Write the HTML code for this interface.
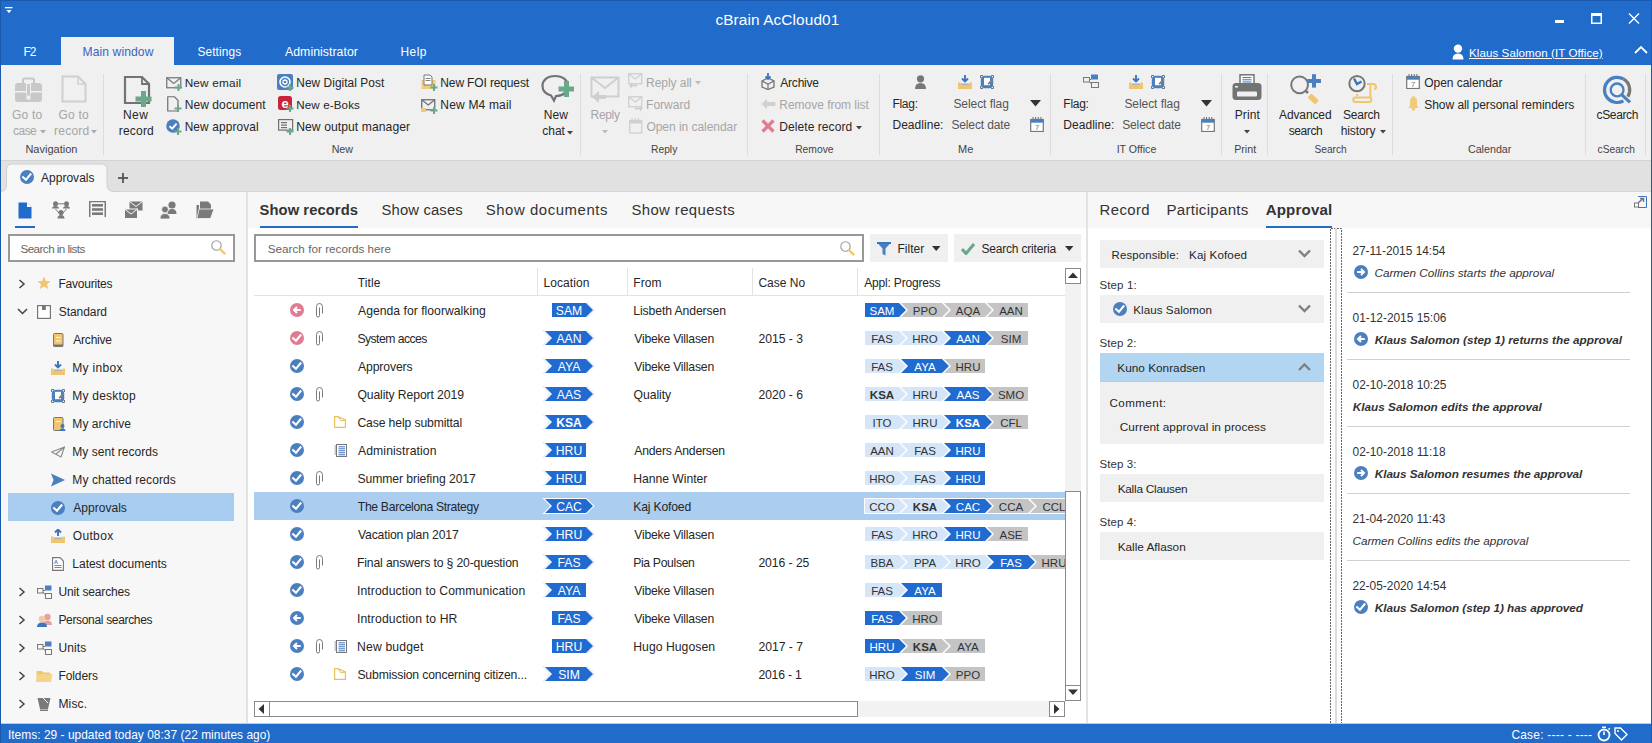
<!DOCTYPE html>
<html><head><meta charset="utf-8"><title>cBrain AcCloud01</title>
<style>
html,body{margin:0;padding:0;}
body{width:1652px;height:743px;overflow:hidden;position:relative;background:#f0f0f0;font-family:"Liberation Sans",sans-serif;}
.t{position:absolute;white-space:nowrap;}
.r{position:absolute;box-sizing:content-box;}
svg.r{display:block;}
</style></head><body>
<div class="r" style="left:0px;top:0px;width:1652px;height:65px;background:#216bcb;"></div>
<div class="r" style="left:0px;top:0px;width:1652px;height:1px;background:#1a59ad;"></div>
<svg class="r" style="left:4px;top:6px;" width="12" height="10" viewBox="0 0 12 10"><rect x="1" y="1" width="7.5" height="1.3" fill="#fff"/><path d="M2.5 4 L7.5 4 L5 7.2 Z" fill="#fff"/></svg>
<div class="t" style="left:715.38px;top:10px;font-size:15.40px;line-height:20px;color:#ffffff;letter-spacing:0.104px;">cBrain AcCloud01</div>
<div class="r" style="left:1555px;top:20px;width:9px;height:3px;background:#fff;"></div>
<svg class="r" style="left:1591px;top:13px;" width="11" height="11" viewBox="0 0 11 11"><rect x="0.75" y="0.75" width="9.5" height="9.5" fill="none" stroke="#fff" stroke-width="1.5"/><rect x="0" y="0" width="11" height="3" fill="#fff"/></svg>
<svg class="r" style="left:1628px;top:13px;" width="12" height="11" viewBox="0 0 12 11"><path d="M1 0.5 L11 10.5 M11 0.5 L1 10.5" stroke="#fff" stroke-width="1.4"/></svg>
<div class="r" style="left:61px;top:37px;width:113px;height:28px;background:#f0f0f0;"></div>
<div class="t" style="left:23.54px;top:45px;font-size:12.00px;line-height:15px;color:#fff;letter-spacing:-1.080px;">F2</div>
<div class="t" style="left:82.53px;top:44px;font-size:12.10px;line-height:16px;color:#3b64c2;letter-spacing:0.101px;">Main window</div>
<div class="t" style="left:197.41px;top:45px;font-size:11.90px;line-height:15px;color:#fff;letter-spacing:0.113px;">Settings</div>
<div class="t" style="left:285.00px;top:44px;font-size:12.30px;line-height:16px;color:#fff;letter-spacing:0.040px;">Administrator</div>
<div class="t" style="left:400.55px;top:45px;font-size:11.90px;line-height:15px;color:#fff;letter-spacing:0.471px;">Help</div>
<svg class="r" style="left:1452px;top:44px;" width="12" height="16" viewBox="0 0 12 16"><circle cx="6" cy="4.6" r="4.2" fill="#fff"/><path d="M0.5 15.5 Q0.5 9.5 6 9.5 Q11.5 9.5 11.5 15.5 Z" fill="#fff"/></svg>
<div class="t" style="left:1469.07px;top:45px;font-size:11.60px;line-height:15px;color:#fff;letter-spacing:0.053px;text-decoration:underline;">Klaus Salomon (IT Office)</div>
<svg class="r" style="left:1634px;top:45px;" width="14" height="9" viewBox="0 0 14 9"><path d="M1 8 L7 2 L13 8" fill="none" stroke="#fff" stroke-width="1.8"/></svg>
<div class="r" style="left:1px;top:65px;width:1650px;height:95px;background:#f0f0f0;"></div>
<div class="r" style="left:1px;top:160px;width:1650px;height:1px;background:#d4d4d4;"></div>
<div class="r" style="left:103px;top:74px;width:1px;height:81px;background:#dcdcdc;"></div>
<div class="r" style="left:580px;top:74px;width:1px;height:81px;background:#dcdcdc;"></div>
<div class="r" style="left:747px;top:74px;width:1px;height:81px;background:#dcdcdc;"></div>
<div class="r" style="left:879px;top:74px;width:1px;height:81px;background:#dcdcdc;"></div>
<div class="r" style="left:1050px;top:74px;width:1px;height:81px;background:#dcdcdc;"></div>
<div class="r" style="left:1221px;top:74px;width:1px;height:81px;background:#dcdcdc;"></div>
<div class="r" style="left:1267px;top:74px;width:1px;height:81px;background:#dcdcdc;"></div>
<div class="r" style="left:1392px;top:74px;width:1px;height:81px;background:#dcdcdc;"></div>
<div class="r" style="left:1585px;top:74px;width:1px;height:81px;background:#dcdcdc;"></div>
<div class="r" style="left:1645px;top:74px;width:1px;height:81px;background:#dcdcdc;"></div>
<div class="t" style="left:25.42px;top:142px;font-size:11.00px;line-height:14px;color:#444;">Navigation</div>
<div class="t" style="left:331.64px;top:142px;font-size:10.70px;line-height:14px;color:#444;">New</div>
<div class="t" style="left:650.98px;top:143px;font-size:10.30px;line-height:13px;color:#444;">Reply</div>
<div class="t" style="left:795.18px;top:143px;font-size:10.30px;line-height:13px;color:#444;">Remove</div>
<div class="t" style="left:958.12px;top:142px;font-size:11.00px;line-height:14px;color:#444;">Me</div>
<div class="t" style="left:1116.65px;top:142px;font-size:10.60px;line-height:14px;color:#444;">IT Office</div>
<div class="t" style="left:1234.14px;top:142px;font-size:10.70px;line-height:14px;color:#444;">Print</div>
<div class="t" style="left:1314.49px;top:143px;font-size:10.20px;line-height:13px;color:#444;">Search</div>
<div class="t" style="left:1467.96px;top:142px;font-size:10.70px;line-height:14px;color:#444;">Calendar</div>
<div class="t" style="left:1597.59px;top:143px;font-size:10.20px;line-height:13px;color:#444;">cSearch</div>
<svg class="r" style="left:14px;top:77px;" width="29" height="26" viewBox="0 0 29 26"><rect x="1" y="6" width="27" height="19" rx="3" fill="#c8c8c8"/><rect x="9" y="1.5" width="11" height="6" rx="1.5" fill="none" stroke="#c8c8c8" stroke-width="2"/><rect x="1" y="14" width="27" height="1.5" fill="#f0f0f0"/><rect x="12" y="6" width="5" height="15" fill="#f0f0f0"/><rect x="13" y="7" width="3" height="13" fill="#c8c8c8"/><rect x="12" y="18" width="5" height="5" fill="#f0f0f0" stroke="#c8c8c8" stroke-width="1"/></svg>
<svg class="r" style="left:61px;top:75px;" width="26" height="28" viewBox="0 0 26 28"><path d="M1.5 1.5 H17 L24.5 9 V26.5 H1.5 Z" fill="none" stroke="#cfcfcf" stroke-width="2"/><path d="M17 1.5 V9 H24.5" fill="none" stroke="#cfcfcf" stroke-width="1.5"/></svg>
<div class="t" style="left:12.00px;top:108px;font-size:12.00px;line-height:15px;color:#a6a6a6;letter-spacing:0.195px;">Go to</div>
<div class="t" style="left:13.12px;top:124px;font-size:12.00px;line-height:15px;color:#a6a6a6;letter-spacing:-0.553px;">case</div>
<div class="t" style="left:54.08px;top:124px;font-size:12.00px;line-height:15px;color:#a6a6a6;letter-spacing:0.216px;">record</div>
<div class="t" style="left:58.60px;top:108px;font-size:12.00px;line-height:15px;color:#a6a6a6;letter-spacing:0.195px;">Go to</div>
<svg class="r" style="left:40px;top:130px;" width="6" height="4" viewBox="0 0 6 4"><path d="M0 0 H6 L3 3.5 Z" fill="#aaa"/></svg>
<svg class="r" style="left:91px;top:130px;" width="6" height="4" viewBox="0 0 6 4"><path d="M0 0 H6 L3 3.5 Z" fill="#aaa"/></svg>
<svg class="r" style="left:123px;top:75px;" width="30" height="32" viewBox="0 0 30 32"><path d="M2 2 H19 L26 9 V28 H2 Z" fill="none" stroke="#737373" stroke-width="2.2"/><path d="M19 2 V9 H26" fill="none" stroke="#737373" stroke-width="1.8"/><rect x="18" y="16" width="5" height="16" fill="#6aa88c"/><rect x="12.5" y="21.5" width="16" height="5" fill="#6aa88c"/></svg>
<div class="t" style="left:123.04px;top:108px;font-size:12.00px;line-height:15px;color:#262626;letter-spacing:0.420px;">New</div>
<div class="t" style="left:118.68px;top:124px;font-size:12.00px;line-height:15px;color:#262626;letter-spacing:0.216px;">record</div>
<svg class="r" style="left:166px;top:76px;" width="17" height="15" viewBox="0 0 17 15"><rect x="0.75" y="1.75" width="14" height="10" fill="none" stroke="#7a7a7a" stroke-width="1.3"/><path d="M0.75 1.75 L7.75 7.5 L14.75 1.75" fill="none" stroke="#7a7a7a" stroke-width="1.2"/><rect x="11.5" y="8" width="2" height="7" fill="#6aa88c"/><rect x="9" y="10.5" width="7" height="2" fill="#6aa88c"/></svg>
<svg class="r" style="left:167px;top:96px;" width="16" height="17" viewBox="0 0 16 17"><path d="M0.75 0.75 H7.5 L11 4.2 V15 H0.75 Z" fill="none" stroke="#6f6f6f" stroke-width="1.2"/><rect x="10" y="9" width="2" height="7" fill="#6aa88c"/><rect x="7.5" y="11.5" width="7" height="2" fill="#6aa88c"/></svg>
<svg class="r" style="left:166px;top:119px;" width="17" height="16" viewBox="0 0 17 16"><circle cx="7" cy="7" r="6.8" fill="#4a80c0"/><path d="M3.6 7.2 L6.2 9.6 L10.6 4.6" fill="none" stroke="#fff" stroke-width="1.9"/><rect x="11" y="9" width="2" height="7" fill="#6aa88c"/><rect x="8.5" y="11.5" width="7" height="2" fill="#6aa88c"/></svg>
<div class="t" style="left:184.66px;top:76px;font-size:11.80px;line-height:15px;color:#262626;letter-spacing:0.168px;">New email</div>
<div class="t" style="left:184.64px;top:98px;font-size:12.00px;line-height:15px;color:#262626;letter-spacing:0.095px;">New document</div>
<div class="t" style="left:184.65px;top:120px;font-size:11.85px;line-height:15px;color:#262626;letter-spacing:0.151px;">New approval</div>
<svg class="r" style="left:277px;top:74px;" width="17" height="17" viewBox="0 0 17 17"><rect x="0" y="0" width="16" height="16" rx="2" fill="#4a80c0"/><circle cx="8" cy="8" r="5" fill="none" stroke="#fff" stroke-width="1.6"/><circle cx="8" cy="8" r="2" fill="none" stroke="#fff" stroke-width="1.3"/><rect x="12" y="10" width="2" height="7" fill="#6aa88c"/><rect x="9.5" y="12.5" width="7" height="2" fill="#6aa88c"/></svg>
<svg class="r" style="left:278px;top:96px;" width="16" height="17" viewBox="0 0 16 17"><rect x="0" y="0" width="14" height="14" rx="2.5" fill="#c9243a"/><text x="7" y="11.5" font-family="Liberation Sans" font-size="13" font-weight="bold" fill="#fff" text-anchor="middle">e</text><rect x="11" y="9" width="2" height="7" fill="#6aa88c"/><rect x="8.5" y="11.5" width="7" height="2" fill="#6aa88c"/></svg>
<svg class="r" style="left:278px;top:119px;" width="17" height="16" viewBox="0 0 17 16"><rect x="0.6" y="0.6" width="14" height="10.5" fill="none" stroke="#6f6f6f" stroke-width="1.2"/><rect x="3" y="3" width="6" height="1.2" fill="#6f6f6f"/><rect x="3" y="5.5" width="6" height="1.2" fill="#6f6f6f"/><rect x="3" y="8" width="6" height="1.2" fill="#6f6f6f"/><rect x="11" y="9" width="2" height="7" fill="#6aa88c"/><rect x="8.5" y="11.5" width="7" height="2" fill="#6aa88c"/></svg>
<div class="t" style="left:296.25px;top:76px;font-size:11.86px;line-height:15px;color:#262626;letter-spacing:0.068px;">New Digital Post</div>
<div class="t" style="left:296.27px;top:97px;font-size:11.60px;line-height:15px;color:#262626;letter-spacing:0.128px;">New e-Boks</div>
<div class="t" style="left:296.23px;top:119px;font-size:12.15px;line-height:16px;color:#262626;letter-spacing:0.067px;">New output manager</div>
<svg class="r" style="left:421px;top:74px;" width="17" height="17" viewBox="0 0 17 17"><rect x="0.5" y="6" width="14" height="9" fill="#f0cc7a"/><path d="M3 1 H9 L11 3 V11 H3 Z" fill="#fff" stroke="#777" stroke-width="1"/><rect x="4.5" y="4" width="5" height="0.9" fill="#777"/><rect x="4.5" y="6" width="5" height="0.9" fill="#777"/><rect x="12" y="10" width="2" height="7" fill="#6aa88c"/><rect x="9.5" y="12.5" width="7" height="2" fill="#6aa88c"/></svg>
<svg class="r" style="left:421px;top:98px;" width="17" height="17" viewBox="0 0 17 17"><rect x="0.75" y="1.75" width="13" height="10" fill="none" stroke="#6f6f6f" stroke-width="1.3"/><path d="M0.75 1.75 L7.25 7 L13.75 1.75" fill="none" stroke="#6f6f6f" stroke-width="1.2"/><rect x="0" y="10" width="5" height="4" fill="#f0cc7a"/><rect x="12" y="9" width="2" height="7" fill="#6aa88c"/><rect x="9.5" y="11.5" width="7" height="2" fill="#6aa88c"/></svg>
<div class="t" style="left:440.34px;top:76px;font-size:12.00px;line-height:15px;color:#262626;letter-spacing:-0.139px;">New FOI request</div>
<div class="t" style="left:440.34px;top:98px;font-size:12.00px;line-height:15px;color:#262626;letter-spacing:0.182px;">New M4 mail</div>
<svg class="r" style="left:541px;top:74px;" width="33" height="30" viewBox="0 0 33 30"><path d="M14 2 C6 2 1.5 6.5 1.5 12 C1.5 16.5 5 20 10 21.5 L13 26.5 L15 22 C22 22 27 17.5 27 12 C27 6.5 22 2 14 2 Z" fill="none" stroke="#737373" stroke-width="2.2"/><rect x="23" y="7" width="5" height="16" fill="#6aa88c"/><rect x="17.5" y="12.5" width="16" height="5" fill="#6aa88c"/></svg>
<div class="t" style="left:543.84px;top:108px;font-size:12.00px;line-height:15px;color:#262626;letter-spacing:0.020px;">New</div>
<div class="t" style="left:542.22px;top:124px;font-size:12.00px;line-height:15px;color:#262626;">chat</div>
<svg class="r" style="left:567px;top:131px;" width="6" height="4" viewBox="0 0 6 4"><path d="M0 0 H6 L3 3.5 Z" fill="#444"/></svg>
<svg class="r" style="left:590px;top:76px;" width="30" height="28" viewBox="0 0 30 28"><rect x="1.5" y="1.5" width="27" height="19" fill="none" stroke="#cfcfcf" stroke-width="2"/><path d="M1.5 1.5 L15 12 L28.5 1.5" fill="none" stroke="#cfcfcf" stroke-width="2"/><path d="M2 21 L9 15 V19 H16 V23 H9 V27 Z" fill="#cfcfcf"/></svg>
<div class="t" style="left:590.54px;top:108px;font-size:12.00px;line-height:15px;color:#a6a6a6;letter-spacing:-0.315px;">Reply</div>
<svg class="r" style="left:602px;top:130px;" width="6" height="4" viewBox="0 0 6 4"><path d="M0 0 H6 L3 3.5 Z" fill="#bbb"/></svg>
<svg class="r" style="left:628px;top:73px;" width="16" height="16" viewBox="0 0 16 16"><rect x="0.75" y="0.75" width="13" height="10" fill="none" stroke="#cfcfcf" stroke-width="1.3"/><path d="M0.75 0.75 L7.25 6 L13.75 0.75" fill="none" stroke="#cfcfcf" stroke-width="1.2"/><path d="M1 12.5 L4 9.5 V11.5 H9 V13.5 H4 V15.5 Z" fill="#cfcfcf"/></svg>
<svg class="r" style="left:628px;top:96px;" width="16" height="16" viewBox="0 0 16 16"><rect x="0.75" y="0.75" width="13" height="10" fill="none" stroke="#cfcfcf" stroke-width="1.3"/><path d="M0.75 0.75 L7.25 6 L13.75 0.75" fill="none" stroke="#cfcfcf" stroke-width="1.2"/><path d="M15 12.5 L12 9.5 V11.5 H7 V13.5 H12 V15.5 Z" fill="#cfcfcf"/></svg>
<svg class="r" style="left:629px;top:118px;" width="14" height="16" viewBox="0 0 14 16"><rect x="0.75" y="2.5" width="12" height="12.5" fill="none" stroke="#cfcfcf" stroke-width="1.3"/><rect x="0.75" y="2.5" width="12" height="3" fill="#cfcfcf"/><rect x="2.5" y="0" width="1.2" height="3" fill="#cfcfcf"/><rect x="5.5" y="0" width="1.2" height="3" fill="#cfcfcf"/><rect x="8.5" y="0" width="1.2" height="3" fill="#cfcfcf"/></svg>
<div class="t" style="left:646.04px;top:76px;font-size:12.00px;line-height:15px;color:#a6a6a6;letter-spacing:-0.035px;">Reply all</div>
<svg class="r" style="left:695px;top:81px;" width="6" height="4" viewBox="0 0 6 4"><path d="M0 0 H6 L3 3.5 Z" fill="#bbb"/></svg>
<div class="t" style="left:646.04px;top:98px;font-size:12.00px;line-height:15px;color:#a6a6a6;letter-spacing:0.027px;">Forward</div>
<div class="t" style="left:646.40px;top:120px;font-size:12.00px;line-height:15px;color:#a6a6a6;letter-spacing:-0.040px;">Open in calendar</div>
<svg class="r" style="left:760px;top:73px;" width="16" height="17" viewBox="0 0 16 17"><path d="M2 8 L8 5 L14 8 V14 L8 16.5 L2 14 Z" fill="none" stroke="#737373" stroke-width="1.3"/><path d="M2 8 L8 11 L14 8 M8 11 V16.5" fill="none" stroke="#737373" stroke-width="1.2"/><path d="M8 0 V6 M5.5 3.5 L8 6 L10.5 3.5" fill="none" stroke="#3d74c0" stroke-width="1.8"/></svg>
<div class="t" style="left:780.30px;top:76px;font-size:12.00px;line-height:15px;color:#262626;letter-spacing:-0.213px;">Archive</div>
<svg class="r" style="left:761px;top:98px;" width="15" height="12" viewBox="0 0 15 12"><path d="M0.5 6 L6 1 V4 H14.5 V8 H6 V11 Z" fill="#d0d0d0"/></svg>
<div class="t" style="left:779.34px;top:98px;font-size:12.00px;line-height:15px;color:#a6a6a6;letter-spacing:-0.028px;">Remove from list</div>
<svg class="r" style="left:761px;top:119px;" width="14" height="14" viewBox="0 0 14 14"><path d="M1.5 1.5 L12.5 12.5 M12.5 1.5 L1.5 12.5" stroke="#e07b91" stroke-width="3.2"/></svg>
<div class="t" style="left:779.34px;top:120px;font-size:12.00px;line-height:15px;color:#262626;letter-spacing:0.065px;">Delete record</div>
<svg class="r" style="left:856px;top:126px;" width="6" height="4" viewBox="0 0 6 4"><path d="M0 0 H6 L3 3.5 Z" fill="#444"/></svg>
<svg class="r" style="left:915px;top:75px;" width="11" height="14" viewBox="0 0 11 14"><circle cx="5.5" cy="3.8" r="3.6" fill="#777"/><path d="M0 14 Q0 8 5.5 8 Q11 8 11 14 Z" fill="#777"/></svg>
<svg class="r" style="left:958px;top:75px;" width="14" height="14" viewBox="0 0 14 14"><path d="M0 7.5 H2.5 V10 H11.5 V7.5 H14 V14 H0 Z" fill="#f0c56e"/><path d="M2.5 8.5 H11.5 L11 10 H3 Z" fill="#b0b0b0"/><path d="M7 0 V6.5 M4 3.5 L7 6.5 L10 3.5" fill="none" stroke="#3d74c0" stroke-width="1.9"/></svg>
<svg class="r" style="left:980px;top:75px;" width="14" height="14" viewBox="0 0 14 14"><path d="M0.5 3 V0.5 H3 M11 0.5 H13.5 V3 M13.5 11 V13.5 H11 M3 13.5 H0.5 V11" fill="none" stroke="#777" stroke-width="1"/><rect x="0.8" y="0.8" width="12.4" height="12.4" rx="4" fill="#4a80c0"/><rect x="4" y="2.8" width="6" height="7.4" fill="#fff"/><path d="M12.8 4.2 L8.2 9.2" stroke="#808080" stroke-width="1.8"/></svg>
<div class="t" style="left:892.44px;top:97px;font-size:12.00px;line-height:15px;color:#262626;letter-spacing:-0.280px;">Flag:</div>
<div class="t" style="left:953.40px;top:97px;font-size:12.00px;line-height:15px;color:#555;letter-spacing:-0.060px;">Select flag</div>
<svg class="r" style="left:1030px;top:100px;" width="12" height="7" viewBox="0 0 12 7"><path d="M0 0 H11 L5.5 6.5 Z" fill="#333"/></svg>
<div class="t" style="left:892.44px;top:118px;font-size:12.00px;line-height:15px;color:#262626;letter-spacing:0.035px;">Deadline:</div>
<div class="t" style="left:951.40px;top:118px;font-size:12.00px;line-height:15px;color:#555;letter-spacing:-0.132px;">Select date</div>
<svg class="r" style="left:1030px;top:117px;" width="14" height="15" viewBox="0 0 14 15"><rect x="0.7" y="2.5" width="12.6" height="12" fill="#fff" stroke="#777" stroke-width="1.2"/><rect x="0.7" y="2.5" width="12.6" height="3.2" fill="#4a80c0"/><rect x="2.5" y="0" width="1.1" height="3" fill="#777"/><rect x="5" y="0" width="1.1" height="3" fill="#777"/><rect x="7.7" y="0" width="1.1" height="3" fill="#777"/><rect x="10.3" y="0" width="1.1" height="3" fill="#777"/><text x="7" y="13.3" font-family="Liberation Sans" font-size="7.5" fill="#777" text-anchor="middle">7</text></svg>
<svg class="r" style="left:1083px;top:74px;" width="17" height="14" viewBox="0 0 17 14"><rect x="8" y="0.5" width="7" height="5" fill="#4a80c0"/><rect x="0.5" y="3.5" width="6" height="4.5" fill="none" stroke="#777" stroke-width="1"/><rect x="8.5" y="8.5" width="7" height="5" fill="none" stroke="#777" stroke-width="1"/><path d="M6.5 5.5 H8 M6 7 L8.5 10" stroke="#777" stroke-width="1"/></svg>
<svg class="r" style="left:1129px;top:75px;" width="14" height="14" viewBox="0 0 14 14"><path d="M0 7.5 H2.5 V10 H11.5 V7.5 H14 V14 H0 Z" fill="#f0c56e"/><path d="M2.5 8.5 H11.5 L11 10 H3 Z" fill="#b0b0b0"/><path d="M7 0 V6.5 M4 3.5 L7 6.5 L10 3.5" fill="none" stroke="#3d74c0" stroke-width="1.9"/></svg>
<svg class="r" style="left:1151px;top:75px;" width="14" height="14" viewBox="0 0 14 14"><path d="M0.5 3 V0.5 H3 M11 0.5 H13.5 V3 M13.5 11 V13.5 H11 M3 13.5 H0.5 V11" fill="none" stroke="#777" stroke-width="1"/><rect x="0.8" y="0.8" width="12.4" height="12.4" rx="4" fill="#4a80c0"/><rect x="4" y="2.8" width="6" height="7.4" fill="#fff"/><path d="M12.8 4.2 L8.2 9.2" stroke="#808080" stroke-width="1.8"/></svg>
<div class="t" style="left:1063.34px;top:97px;font-size:12.00px;line-height:15px;color:#262626;letter-spacing:-0.280px;">Flag:</div>
<div class="t" style="left:1124.40px;top:97px;font-size:12.00px;line-height:15px;color:#555;letter-spacing:-0.060px;">Select flag</div>
<svg class="r" style="left:1201px;top:100px;" width="12" height="7" viewBox="0 0 12 7"><path d="M0 0 H11 L5.5 6.5 Z" fill="#333"/></svg>
<div class="t" style="left:1063.34px;top:118px;font-size:12.00px;line-height:15px;color:#262626;letter-spacing:0.035px;">Deadline:</div>
<div class="t" style="left:1122.20px;top:118px;font-size:12.00px;line-height:15px;color:#555;letter-spacing:-0.132px;">Select date</div>
<svg class="r" style="left:1201px;top:117px;" width="14" height="15" viewBox="0 0 14 15"><rect x="0.7" y="2.5" width="12.6" height="12" fill="#fff" stroke="#777" stroke-width="1.2"/><rect x="0.7" y="2.5" width="12.6" height="3.2" fill="#4a80c0"/><rect x="2.5" y="0" width="1.1" height="3" fill="#777"/><rect x="5" y="0" width="1.1" height="3" fill="#777"/><rect x="7.7" y="0" width="1.1" height="3" fill="#777"/><rect x="10.3" y="0" width="1.1" height="3" fill="#777"/><text x="7" y="13.3" font-family="Liberation Sans" font-size="7.5" fill="#777" text-anchor="middle">7</text></svg>
<svg class="r" style="left:1232px;top:74px;" width="30" height="27" viewBox="0 0 30 27"><rect x="8" y="0.8" width="14" height="9" fill="#fff" stroke="#737373" stroke-width="1.5"/><rect x="10.5" y="3" width="9" height="1.1" fill="#4a80c0"/><rect x="10.5" y="5.2" width="9" height="1.1" fill="#4a80c0"/><rect x="10.5" y="7.4" width="9" height="1.1" fill="#4a80c0"/><rect x="0.5" y="9" width="29" height="17" rx="3.5" fill="#737373"/><rect x="5" y="17.5" width="20" height="5" rx="1" fill="#f0f0f0"/><rect x="3" y="12" width="3" height="1.5" fill="#f0f0f0"/></svg>
<div class="t" style="left:1234.64px;top:108px;font-size:12.00px;line-height:15px;color:#262626;letter-spacing:0.165px;">Print</div>
<svg class="r" style="left:1244px;top:130px;" width="6" height="4" viewBox="0 0 6 4"><path d="M0 0 H6 L3 3.5 Z" fill="#444"/></svg>
<svg class="r" style="left:1289px;top:73px;" width="36" height="36" viewBox="0 0 36 36"><circle cx="10.6" cy="11.8" r="8.4" fill="none" stroke="#777" stroke-width="2"/><path d="M17 18 L19 20" stroke="#777" stroke-width="2.5"/><path d="M20.5 22.5 L28 29.5" stroke="#f0c56e" stroke-width="5.5"/><rect x="23" y="1.2" width="4" height="13.4" fill="#4a80c0"/><rect x="18.2" y="6" width="13.8" height="4" fill="#4a80c0"/></svg>
<div class="t" style="left:1279.00px;top:108px;font-size:12.00px;line-height:15px;color:#262626;letter-spacing:-0.109px;">Advanced</div>
<div class="t" style="left:1288.64px;top:124px;font-size:12.00px;line-height:15px;color:#262626;letter-spacing:-0.384px;">search</div>
<svg class="r" style="left:1345px;top:72px;" width="34" height="33" viewBox="0 0 34 33"><path d="M25.4 12 V28" stroke="#f0c56e" stroke-width="2"/><path d="M22 12 H28 Q31 12 31 15 Q31 17 29 17" fill="none" stroke="#f0c56e" stroke-width="2"/><rect x="8.3" y="25.4" width="18" height="4.5" rx="2.2" fill="#f0f0f0" stroke="#f0c56e" stroke-width="2"/><rect x="11.2" y="22" width="2" height="2" fill="#f0c56e"/><circle cx="12" cy="11.6" r="7.7" fill="#f0f0f0" stroke="#777" stroke-width="2"/><path d="M9 6.5 L12 12 L16.5 9.5" fill="none" stroke="#3d74c0" stroke-width="2.4"/></svg>
<div class="t" style="left:1343.10px;top:108px;font-size:12.00px;line-height:15px;color:#262626;letter-spacing:-0.260px;">Search</div>
<div class="t" style="left:1340.66px;top:124px;font-size:12.00px;line-height:15px;color:#262626;letter-spacing:-0.093px;">history</div>
<svg class="r" style="left:1380px;top:130px;" width="6" height="4" viewBox="0 0 6 4"><path d="M0 0 H6 L3 3.5 Z" fill="#444"/></svg>
<svg class="r" style="left:1406px;top:74px;" width="14" height="15" viewBox="0 0 14 15"><rect x="0.7" y="2.5" width="12.6" height="12" fill="#fff" stroke="#777" stroke-width="1.2"/><rect x="0.7" y="2.5" width="12.6" height="3.2" fill="#4a80c0"/><rect x="2.5" y="0" width="1.1" height="3" fill="#777"/><rect x="5" y="0" width="1.1" height="3" fill="#777"/><rect x="7.7" y="0" width="1.1" height="3" fill="#777"/><rect x="10.3" y="0" width="1.1" height="3" fill="#777"/><text x="7" y="13.3" font-family="Liberation Sans" font-size="7.5" fill="#777" text-anchor="middle">7</text></svg>
<div class="t" style="left:1424.30px;top:76px;font-size:12.00px;line-height:15px;color:#262626;letter-spacing:-0.050px;">Open calendar</div>
<svg class="r" style="left:1408px;top:96px;" width="11" height="15" viewBox="0 0 11 15"><path d="M5.5 1 Q2 1 2 5.5 V9.5 L0.5 12 H10.5 L9 9.5 V5.5 Q9 1 5.5 1 Z" fill="#f0cc7a"/><rect x="4.5" y="0" width="2" height="2" fill="#f0cc7a"/><circle cx="5.5" cy="13" r="1.8" fill="#f0cc7a"/></svg>
<div class="t" style="left:1424.30px;top:98px;font-size:12.00px;line-height:15px;color:#262626;letter-spacing:-0.053px;">Show all personal reminders</div>
<svg class="r" style="left:1601px;top:75px;" width="33" height="31" viewBox="0 0 33 31"><path d="M22.4 25.81 A12.6 12.6 0 1 1 22.78 4.21" fill="none" stroke="#4a80c0" stroke-width="3.2"/><path d="M22.78 4.21 A12.6 12.6 0 0 1 26.79 21.58" fill="none" stroke="#777" stroke-width="3.2"/><circle cx="16.1" cy="14.9" r="6.4" fill="none" stroke="#4a80c0" stroke-width="2.3"/><path d="M20.9 19.8 L29 27.3" stroke="#4a80c0" stroke-width="3.2"/></svg>
<div class="t" style="left:1596.52px;top:108px;font-size:12.00px;line-height:15px;color:#262626;letter-spacing:-0.353px;">cSearch</div>
<div class="r" style="left:1px;top:161px;width:1650px;height:30px;background:#e1e1e1;"></div>
<div class="r" style="left:1px;top:191px;width:1650px;height:1px;background:#d6d6d6;"></div>
<svg class="r" style="left:0px;top:162px;" width="120" height="31" viewBox="0 0 120 31"><path d="M0 29.5 Q6.5 29.5 6.5 23 V8 Q6.5 2 12.5 2 H101 Q107 2 107 8 V23 Q107 29.5 114 29.5 H120 V31 H0 Z" fill="#f7f7f7"/><path d="M0 29.5 Q6.5 29.5 6.5 23 V8 Q6.5 2 12.5 2 H101 Q107 2 107 8 V23 Q107 29.5 114 29.5 H120" fill="none" stroke="#d0d0d0" stroke-width="1"/></svg>
<svg class="r" style="left:20px;top:170px;" width="14" height="14" viewBox="0 0 14 14"><circle cx="7.0" cy="7.0" r="7.0" fill="#4a80c0"/><path d="M3.15 7.14 L5.95 9.80 L10.50 4.34" fill="none" stroke="#fff" stroke-width="2.10" stroke-linecap="square"/></svg>
<div class="t" style="left:41.00px;top:171px;font-size:12.00px;line-height:15px;color:#262626;letter-spacing:0.020px;">Approvals</div>
<svg class="r" style="left:118px;top:173px;" width="10" height="10" viewBox="0 0 10 10"><rect x="4.1" y="0" width="1.8" height="10" fill="#555"/><rect x="0" y="4.1" width="10" height="1.8" fill="#555"/></svg>
<div class="r" style="left:1px;top:192px;width:245px;height:531px;background:#f7f7f7;"></div>
<div class="r" style="left:246px;top:192px;width:2px;height:531px;background:#e3e3e3;"></div>
<div class="r" style="left:248px;top:192px;width:838px;height:36px;background:#f7f7f7;"></div>
<div class="r" style="left:248px;top:228px;width:838px;height:495px;background:#ffffff;"></div>
<div class="r" style="left:1086px;top:192px;width:2px;height:531px;background:#e3e3e3;"></div>
<div class="r" style="left:1088px;top:192px;width:563px;height:36px;background:#f7f7f7;"></div>
<div class="r" style="left:1088px;top:228px;width:563px;height:495px;background:#ffffff;"></div>
<svg class="r" style="left:18px;top:202px;" width="14" height="17" viewBox="0 0 14 17"><path d="M0.5 0.5 H9 L13.5 5 V16.5 H0.5 Z" fill="#216bcb"/><path d="M9 0.5 V5 H13.5" fill="#fff"/></svg>
<div class="r" style="left:15px;top:226px;width:20px;height:2px;background:#216bcb;"></div>
<svg class="r" style="left:52px;top:201px;" width="18" height="18" viewBox="0 0 18 18"><circle cx="3.5" cy="2.8" r="2.5" fill="#7a7a7a"/><circle cx="14.5" cy="2.8" r="2.5" fill="#7a7a7a"/><path d="M0 7.5 Q0 5 3.5 5 Q7 5 7 7.5 Z M11 7.5 Q11 5 14.5 5 Q18 5 18 7.5 Z" fill="#7a7a7a"/><circle cx="9" cy="11.5" r="2.6" fill="#7a7a7a"/><path d="M5.5 17.5 Q5.5 14 9 14 Q12.5 14 12.5 17.5 Z" fill="#7a7a7a"/><path d="M6 2.8 H12 M3.5 8 L7 12 M14.5 8 L11 12" stroke="#7a7a7a" stroke-width="1"/></svg>
<svg class="r" style="left:89px;top:201px;" width="17" height="18" viewBox="0 0 17 18"><rect x="0.75" y="0.5" width="15.5" height="17" fill="none" stroke="#7a7a7a" stroke-width="1.5"/><rect x="3" y="3" width="11" height="2.6" fill="#7a7a7a"/><rect x="3" y="7.2" width="11" height="2.6" fill="#7a7a7a"/><rect x="3" y="11.4" width="11" height="2.6" fill="#7a7a7a"/><rect x="0" y="16" width="17" height="2" fill="#f7f7f7"/></svg>
<svg class="r" style="left:124px;top:201px;" width="19" height="18" viewBox="0 0 19 18"><rect x="5.5" y="0.5" width="13" height="9" fill="#7a7a7a"/><path d="M5.5 0.5 L12 5.5 L18.5 0.5" fill="none" stroke="#f7f7f7" stroke-width="1"/><rect x="0.5" y="8" width="13" height="9.5" fill="#7a7a7a" stroke="#f7f7f7" stroke-width="1"/><path d="M0.5 8 L7 13 L13.5 8" fill="none" stroke="#f7f7f7" stroke-width="1"/></svg>
<svg class="r" style="left:160px;top:201px;" width="18" height="18" viewBox="0 0 18 18"><circle cx="12" cy="4" r="3.6" fill="#7a7a7a"/><path d="M7.5 13 Q7.5 8 12 8 Q16.5 8 16.5 13 Z" fill="#7a7a7a"/><circle cx="5" cy="8.5" r="3.4" fill="#7a7a7a" stroke="#f7f7f7" stroke-width="0.8"/><path d="M0 18 Q0 12.5 5 12.5 Q10 12.5 10 18 Z" fill="#7a7a7a" stroke="#f7f7f7" stroke-width="0.8"/></svg>
<svg class="r" style="left:196px;top:201px;" width="18" height="18" viewBox="0 0 18 18"><path d="M4 0.5 H12 L15 3.5 V12 H4 Z" fill="#7a7a7a"/><path d="M0.5 4 H3 V17.5 H0.5 Z" fill="#7a7a7a"/><path d="M3 8 H18 L14.5 17.5 H1 Z" fill="#7a7a7a" stroke="#f7f7f7" stroke-width="0.8"/></svg>
<div class="r" style="left:8px;top:234px;width:223px;height:24px;background:#fff;border:2px solid #9a9896;"></div>
<div class="t" style="left:20.41px;top:241px;font-size:11.70px;line-height:15px;color:#666;letter-spacing:-0.560px;">Search in lists</div>
<svg class="r" style="left:211px;top:240px;" width="15" height="15" viewBox="0 0 15 15"><circle cx="5.5" cy="5.5" r="4.7" fill="none" stroke="#9a9a9a" stroke-width="1.1"/><path d="M9 9 L13.5 13.5" stroke="#f0c56e" stroke-width="2.4" stroke-linecap="round"/></svg>
<div class="r" style="left:8px;top:493px;width:226px;height:28px;background:#a9cdf0;"></div>
<svg class="r" style="left:18px;top:278.5px;" width="8" height="10" viewBox="0 0 8 10"><path d="M1.5 1 L6 5 L1.5 9" fill="none" stroke="#444" stroke-width="1.5"/></svg>
<div class="t" style="left:58.44px;top:277px;font-size:12.00px;line-height:15px;color:#262626;letter-spacing:-0.213px;">Favourites</div>
<svg class="r" style="left:37px;top:275.5px;" width="14" height="14" viewBox="0 0 14 14"><path d="M7 0.5 L8.9 4.9 L13.5 5.2 L10 8.3 L11.1 13 L7 10.5 L2.9 13 L4 8.3 L0.5 5.2 L5.1 4.9 Z" fill="#f0c56e"/></svg>
<svg class="r" style="left:16.5px;top:308.0px;" width="11" height="7" viewBox="0 0 11 7"><path d="M1 1 L5.5 5.5 L10 1" fill="none" stroke="#444" stroke-width="1.5"/></svg>
<div class="t" style="left:58.80px;top:305px;font-size:12.00px;line-height:15px;color:#262626;letter-spacing:-0.069px;">Standard</div>
<svg class="r" style="left:37px;top:304.5px;" width="14" height="14" viewBox="0 0 14 14"><rect x="0.6" y="0.6" width="12.8" height="12.8" fill="#fff" stroke="#777" stroke-width="1.2"/><rect x="5" y="0.6" width="3.8" height="4.4" fill="#777"/></svg>
<div class="t" style="left:73.30px;top:333px;font-size:12.00px;line-height:15px;color:#262626;letter-spacing:-0.213px;">Archive</div>
<svg class="r" style="left:53px;top:332.5px;" width="11" height="14" viewBox="0 0 11 14"><rect x="0.5" y="0.5" width="9.5" height="13" rx="1" fill="#f0c56e" stroke="#777" stroke-width="1"/><rect x="0.5" y="11.5" width="9.5" height="2" fill="#777"/><rect x="3" y="4" width="4.5" height="0.9" fill="#fff"/><rect x="3" y="7.5" width="4.5" height="0.9" fill="#fff"/></svg>
<div class="t" style="left:72.34px;top:361px;font-size:12.00px;line-height:15px;color:#262626;letter-spacing:0.297px;">My inbox</div>
<svg class="r" style="left:51px;top:360.5px;" width="14" height="14" viewBox="0 0 14 14"><path d="M0 7.5 H2.5 V10 H11.5 V7.5 H14 V14 H0 Z" fill="#f0c56e"/><path d="M2.5 8.5 H11.5 L11 10 H3 Z" fill="#b0b0b0"/><path d="M7 0 V6.5 M4 3.5 L7 6.5 L10 3.5" fill="none" stroke="#3d74c0" stroke-width="1.9"/></svg>
<div class="t" style="left:72.34px;top:389px;font-size:12.00px;line-height:15px;color:#262626;letter-spacing:0.211px;">My desktop</div>
<svg class="r" style="left:51px;top:388.5px;" width="14" height="14" viewBox="0 0 14 14"><path d="M0.5 3 V0.5 H3 M11 0.5 H13.5 V3 M13.5 11 V13.5 H11 M3 13.5 H0.5 V11" fill="none" stroke="#777" stroke-width="1"/><rect x="0.8" y="0.8" width="12.4" height="12.4" rx="4" fill="#4a80c0"/><rect x="4" y="2.8" width="6" height="7.4" fill="#fff"/><path d="M12.8 4.2 L8.2 9.2" stroke="#808080" stroke-width="1.8"/></svg>
<div class="t" style="left:72.34px;top:417px;font-size:12.00px;line-height:15px;color:#262626;letter-spacing:0.064px;">My archive</div>
<svg class="r" style="left:53px;top:416.5px;" width="13" height="14" viewBox="0 0 13 14"><rect x="0.5" y="0.5" width="9.5" height="13" rx="1" fill="#f0c56e" stroke="#777" stroke-width="1"/><rect x="3" y="4" width="4.5" height="0.9" fill="#fff"/><circle cx="9.5" cy="9" r="2" fill="#3d74c0"/><path d="M6.5 14 Q6.5 11.5 9.5 11.5 Q12.5 11.5 12.5 14 Z" fill="#3d74c0"/></svg>
<div class="t" style="left:72.34px;top:445px;font-size:12.00px;line-height:15px;color:#262626;letter-spacing:0.021px;">My sent records</div>
<svg class="r" style="left:51px;top:445.5px;" width="14" height="12" viewBox="0 0 14 12"><path d="M0.5 6 L13.5 1 L10 11 Z M5 8 L13.5 1" fill="none" stroke="#888" stroke-width="1.1"/></svg>
<div class="t" style="left:72.34px;top:473px;font-size:12.00px;line-height:15px;color:#262626;letter-spacing:0.084px;">My chatted records</div>
<svg class="r" style="left:51px;top:472.5px;" width="14" height="14" viewBox="0 0 14 14"><path d="M0 0.5 L14 7 L0 13.5 L2.5 7 Z" fill="#4a80c0"/></svg>
<div class="t" style="left:73.30px;top:501px;font-size:12.00px;line-height:15px;color:#262626;letter-spacing:0.020px;">Approvals</div>
<svg class="r" style="left:51px;top:500.5px;" width="14" height="14" viewBox="0 0 14 14"><circle cx="7.0" cy="7.0" r="7.0" fill="#4a80c0"/><path d="M3.15 7.14 L5.95 9.80 L10.50 4.34" fill="none" stroke="#fff" stroke-width="2.10" stroke-linecap="square"/></svg>
<div class="t" style="left:72.70px;top:529px;font-size:12.00px;line-height:15px;color:#262626;letter-spacing:0.356px;">Outbox</div>
<svg class="r" style="left:51px;top:528.5px;" width="14" height="14" viewBox="0 0 14 14"><path d="M0 7.5 H2.5 V10 H11.5 V7.5 H14 V14 H0 Z" fill="#f0c56e"/><path d="M2.5 8.5 H11.5 L11 10 H3 Z" fill="#b0b0b0"/><path d="M7 7 V0.5 M4 3.5 L7 0.5 L10 3.5" fill="none" stroke="#3d74c0" stroke-width="1.9"/></svg>
<div class="t" style="left:72.34px;top:557px;font-size:12.00px;line-height:15px;color:#262626;letter-spacing:-0.017px;">Latest documents</div>
<svg class="r" style="left:52px;top:556.5px;" width="12" height="14" viewBox="0 0 12 14"><path d="M0.6 0.6 H8 L11.4 4 V13.4 H0.6 Z" fill="#fff" stroke="#777" stroke-width="1.1"/><text x="2" y="6.5" font-family="Liberation Sans" font-size="5.5" font-weight="bold" fill="#4a80c0">A</text><rect x="2.5" y="8" width="7" height="0.9" fill="#777"/><rect x="2.5" y="10" width="7" height="0.9" fill="#777"/></svg>
<svg class="r" style="left:18px;top:586.5px;" width="8" height="10" viewBox="0 0 8 10"><path d="M1.5 1 L6 5 L1.5 9" fill="none" stroke="#444" stroke-width="1.5"/></svg>
<div class="t" style="left:58.44px;top:585px;font-size:12.00px;line-height:15px;color:#262626;letter-spacing:-0.142px;">Unit searches</div>
<svg class="r" style="left:37px;top:584.5px;" width="15" height="14" viewBox="0 0 15 14"><rect x="8" y="0.5" width="6.5" height="5" fill="#4a80c0"/><rect x="0.5" y="3.5" width="5.5" height="4.5" fill="none" stroke="#777" stroke-width="1"/><rect x="8.5" y="8.5" width="6" height="5" fill="none" stroke="#777" stroke-width="1"/><path d="M6 5.5 H8 M6 7 L8.5 10" stroke="#777" stroke-width="1"/></svg>
<svg class="r" style="left:18px;top:614.5px;" width="8" height="10" viewBox="0 0 8 10"><path d="M1.5 1 L6 5 L1.5 9" fill="none" stroke="#444" stroke-width="1.5"/></svg>
<div class="t" style="left:58.44px;top:613px;font-size:12.00px;line-height:15px;color:#262626;letter-spacing:-0.334px;">Personal searches</div>
<svg class="r" style="left:37px;top:612.5px;" width="15" height="14" viewBox="0 0 15 14"><circle cx="10.5" cy="4" r="3.2" fill="#e7a0a0"/><path d="M6 12 Q6 7.5 10.5 7.5 Q15 7.5 15 12 Z" fill="#e7a0a0"/><circle cx="5" cy="6" r="3.2" fill="#f2c9a0"/><path d="M0 14 Q0 9.5 5 9.5 Q10 9.5 10 14 Z" fill="#3d74c0"/></svg>
<svg class="r" style="left:18px;top:642.5px;" width="8" height="10" viewBox="0 0 8 10"><path d="M1.5 1 L6 5 L1.5 9" fill="none" stroke="#444" stroke-width="1.5"/></svg>
<div class="t" style="left:58.44px;top:641px;font-size:12.00px;line-height:15px;color:#262626;letter-spacing:0.140px;">Units</div>
<svg class="r" style="left:37px;top:640.5px;" width="15" height="14" viewBox="0 0 15 14"><rect x="8" y="0.5" width="6.5" height="5" fill="#4a80c0"/><rect x="0.5" y="3.5" width="5.5" height="4.5" fill="none" stroke="#777" stroke-width="1"/><rect x="8.5" y="8.5" width="6" height="5" fill="none" stroke="#777" stroke-width="1"/><path d="M6 5.5 H8 M6 7 L8.5 10" stroke="#777" stroke-width="1"/></svg>
<svg class="r" style="left:18px;top:670.5px;" width="8" height="10" viewBox="0 0 8 10"><path d="M1.5 1 L6 5 L1.5 9" fill="none" stroke="#444" stroke-width="1.5"/></svg>
<div class="t" style="left:58.44px;top:669px;font-size:12.00px;line-height:15px;color:#262626;letter-spacing:-0.090px;">Folders</div>
<svg class="r" style="left:36px;top:668.5px;" width="17" height="14" viewBox="0 0 17 14"><path d="M0.5 2 H6 L7.5 3.5 H14 V13 H0.5 Z" fill="#f0c56e"/><path d="M1.5 5 H16.5 L15 13 H0.5 Z" fill="#f5d48a"/></svg>
<svg class="r" style="left:18px;top:698.5px;" width="8" height="10" viewBox="0 0 8 10"><path d="M1.5 1 L6 5 L1.5 9" fill="none" stroke="#444" stroke-width="1.5"/></svg>
<div class="t" style="left:58.44px;top:697px;font-size:12.00px;line-height:15px;color:#262626;letter-spacing:0.140px;">Misc.</div>
<svg class="r" style="left:37px;top:696.5px;" width="14" height="14" viewBox="0 0 14 14"><path d="M0.5 1 H13.5 L11 12 H3 Z" fill="#7a7a7a"/><rect x="3" y="12.5" width="8" height="1.5" fill="#7a7a7a"/><path d="M6 1 L11 6" stroke="#f7f7f7" stroke-width="1"/></svg>
<div class="t" style="left:259.56px;top:201px;font-size:14.74px;line-height:19px;color:#333;font-weight:bold;letter-spacing:0.087px;">Show records</div>
<div class="r" style="left:260px;top:226px;width:98px;height:2px;background:#216bcb;"></div>
<div class="t" style="left:381.56px;top:201px;font-size:14.84px;line-height:19px;color:#333;letter-spacing:0.133px;">Show cases</div>
<div class="t" style="left:485.65px;top:201px;font-size:14.90px;line-height:19px;color:#333;letter-spacing:0.585px;">Show documents</div>
<div class="t" style="left:631.46px;top:201px;font-size:14.90px;line-height:19px;color:#333;letter-spacing:0.392px;">Show requests</div>
<div class="r" style="left:254px;top:234px;width:606px;height:24px;background:#fff;border:2px solid #9a9896;"></div>
<div class="t" style="left:267.72px;top:241px;font-size:11.70px;line-height:15px;color:#666;letter-spacing:0.023px;">Search for records here</div>
<svg class="r" style="left:840px;top:241px;" width="15" height="15" viewBox="0 0 15 15"><circle cx="5.5" cy="5.5" r="4.7" fill="none" stroke="#9a9a9a" stroke-width="1.1"/><path d="M9 9 L13.5 13.5" stroke="#f0c56e" stroke-width="2.4" stroke-linecap="round"/></svg>
<div class="r" style="left:870px;top:234px;width:78px;height:28px;background:#f0f0f0;"></div>
<svg class="r" style="left:877px;top:242px;" width="14" height="14" viewBox="0 0 14 14"><path d="M0 0.5 H14 L8.5 6.5 V13.5 L5.5 12 V6.5 Z" fill="#4a80c0"/><rect x="0" y="0" width="14" height="2" fill="#3d74c0"/></svg>
<div class="t" style="left:897.54px;top:242px;font-size:12.00px;line-height:15px;color:#262626;letter-spacing:-0.012px;">Filter</div>
<svg class="r" style="left:932px;top:246px;" width="9" height="6" viewBox="0 0 9 6"><path d="M0 0 H8.5 L4.25 5 Z" fill="#333"/></svg>
<div class="r" style="left:954px;top:234px;width:127px;height:28px;background:#f0f0f0;"></div>
<svg class="r" style="left:961px;top:243px;" width="14" height="12" viewBox="0 0 14 12"><path d="M1 6 L5 10.5 L13 1" fill="none" stroke="#6aa88c" stroke-width="3"/></svg>
<div class="t" style="left:981.40px;top:242px;font-size:12.00px;line-height:15px;color:#262626;letter-spacing:-0.186px;">Search criteria</div>
<svg class="r" style="left:1065px;top:246px;" width="9" height="6" viewBox="0 0 9 6"><path d="M0 0 H8.5 L4.25 5 Z" fill="#333"/></svg>
<div class="r" style="left:537px;top:268px;width:1px;height:27px;background:#e3e3e3;"></div>
<div class="r" style="left:627px;top:268px;width:1px;height:27px;background:#e3e3e3;"></div>
<div class="r" style="left:752px;top:268px;width:1px;height:27px;background:#e3e3e3;"></div>
<div class="r" style="left:857px;top:268px;width:1px;height:27px;background:#e3e3e3;"></div>
<div class="r" style="left:254px;top:295px;width:811px;height:1px;background:#e3e3e3;"></div>
<div class="t" style="left:357.76px;top:276px;font-size:12.00px;line-height:15px;color:#262626;letter-spacing:0.130px;">Title</div>
<div class="t" style="left:543.54px;top:276px;font-size:12.00px;line-height:15px;color:#262626;letter-spacing:0.077px;">Location</div>
<div class="t" style="left:633.34px;top:276px;font-size:12.00px;line-height:15px;color:#262626;letter-spacing:0.040px;">From</div>
<div class="t" style="left:758.40px;top:276px;font-size:12.00px;line-height:15px;color:#262626;">Case No</div>
<div class="t" style="left:864.30px;top:276px;font-size:12.00px;line-height:15px;color:#262626;letter-spacing:-0.189px;">Appl: Progress</div>
<div class="r" style="left:1065px;top:268px;width:16px;height:433px;background:#f2f2f2;"></div>
<div class="r" style="left:1065px;top:268px;width:14px;height:14px;background:#fff;border:1px solid #8a8a8a;"></div>
<svg class="r" style="left:1068px;top:272px;" width="10" height="7" viewBox="0 0 10 7"><path d="M0 6 H10 L5 0.5 Z" fill="#333"/></svg>
<div class="r" style="left:1065px;top:491px;width:14px;height:193px;background:#fff;border:1px solid #8a8a8a;"></div>
<div class="r" style="left:1065px;top:685px;width:14px;height:14px;background:#fff;border:1px solid #8a8a8a;"></div>
<svg class="r" style="left:1068px;top:689px;" width="10" height="7" viewBox="0 0 10 7"><path d="M0 0.5 H10 L5 6 Z" fill="#333"/></svg>
<div class="r" style="left:254px;top:701px;width:811px;height:16px;background:#f2f2f2;"></div>
<div class="r" style="left:254px;top:701px;width:14px;height:14px;background:#fff;border:1px solid #8a8a8a;"></div>
<svg class="r" style="left:258px;top:704px;" width="7" height="10" viewBox="0 0 7 10"><path d="M6 0 V10 L0.5 5 Z" fill="#333"/></svg>
<div class="r" style="left:269px;top:701px;width:587px;height:14px;background:#fff;border:1px solid #8a8a8a;"></div>
<div class="r" style="left:1049px;top:701px;width:14px;height:14px;background:#fff;border:1px solid #8a8a8a;"></div>
<svg class="r" style="left:1053px;top:704px;" width="7" height="10" viewBox="0 0 7 10"><path d="M1 0 V10 L6.5 5 Z" fill="#333"/></svg>
<div class="r" style="left:254px;top:492px;width:811px;height:28px;background:#aacdf0;"></div>
<svg class="r" style="left:290px;top:303px;" width="14" height="14" viewBox="0 0 14 14"><circle cx="7" cy="7" r="7" fill="#e07b91"/><path d="M10.8 7 H4.5 M7 4 L4 7 L7 10" fill="none" stroke="#fff" stroke-width="2"/></svg>
<svg class="r" style="left:315px;top:302px;" width="9" height="17" viewBox="0 0 9 17"><path d="M7.5 11.5 V4.5 A3 3 0 0 0 1.5 4.5 V13.5 A1.5 1.5 0 0 0 4.5 13.5 V5.5" fill="none" stroke="#7a7a7a" stroke-width="1"/></svg>
<div class="t" style="left:358.00px;top:303px;font-size:12.20px;line-height:16px;color:#262626;letter-spacing:0.017px;">Agenda for floorwalking</div>
<div class="t" style="left:633.22px;top:303px;font-size:12.20px;line-height:16px;color:#262626;letter-spacing:-0.092px;">Lisbeth Andersen</div>
<svg class="r" style="left:541px;top:300px;" width="58" height="20" viewBox="0 0 58 20"><path d="M46 2.2 L53.3 10 L46 17.8" fill="none" stroke="#d6e3f5" stroke-width="1.1" stroke-dasharray="1.2,0.6"/><polygon points="11.0,3.0 45.0,3.0 52.0,10.0 45.0,17.0 11.0,17.0" fill="#216bd0"/><text x="28" y="15" font-family="Liberation Sans" font-size="12.2" fill="#fff" text-anchor="middle">SAM</text></svg>
<svg class="r" style="left:858px;top:302px;overflow:hidden;" width="207" height="16" viewBox="0 0 207 16"><polygon points="7.0,1.0 41.0,1.0 48.0,8.0 41.0,15.0 7.0,15.0" fill="#216bd0"/><text x="24" y="12.9" font-family="Liberation Sans" font-size="11.5" fill="#fff" text-anchor="middle">SAM</text><polygon points="43.0,1.0 84.0,1.0 91.0,8.0 84.0,15.0 43.0,15.0 50.0,8.0" fill="#c4c4c4"/><text x="67" y="12.9" font-family="Liberation Sans" font-size="11.5" fill="#333" text-anchor="middle">PPO</text><polygon points="86.0,1.0 127.0,1.0 134.0,8.0 127.0,15.0 86.0,15.0 93.0,8.0" fill="#c4c4c4"/><text x="110" y="12.9" font-family="Liberation Sans" font-size="11.5" fill="#333" text-anchor="middle">AQA</text><polygon points="129.0,1.0 170.0,1.0 170.0,15.0 129.0,15.0 136.0,8.0" fill="#c4c4c4"/><text x="153" y="12.9" font-family="Liberation Sans" font-size="11.5" fill="#333" text-anchor="middle">AAN</text></svg>
<svg class="r" style="left:290px;top:331px;" width="14" height="14" viewBox="0 0 14 14"><circle cx="7.0" cy="7.0" r="7.0" fill="#e07b91"/><path d="M3.15 7.14 L5.95 9.80 L10.50 4.34" fill="none" stroke="#fff" stroke-width="2.10" stroke-linecap="square"/></svg>
<svg class="r" style="left:315px;top:330px;" width="9" height="17" viewBox="0 0 9 17"><path d="M7.5 11.5 V4.5 A3 3 0 0 0 1.5 4.5 V13.5 A1.5 1.5 0 0 0 4.5 13.5 V5.5" fill="none" stroke="#7a7a7a" stroke-width="1"/></svg>
<div class="t" style="left:357.39px;top:331px;font-size:12.20px;line-height:16px;color:#262626;letter-spacing:-0.537px;">System acces</div>
<div class="t" style="left:634.20px;top:331px;font-size:12.20px;line-height:16px;color:#262626;letter-spacing:-0.208px;">Vibeke Villasen</div>
<div class="t" style="left:758.39px;top:331px;font-size:12.20px;line-height:16px;color:#262626;letter-spacing:-0.022px;">2015 - 3</div>
<svg class="r" style="left:541px;top:328px;" width="58" height="20" viewBox="0 0 58 20"><path d="M1.8 2.2 L9 10 L1.8 17.8" fill="none" stroke="#d6e3f5" stroke-width="1.1" stroke-dasharray="1.2,0.6"/><path d="M46 2.2 L53.3 10 L46 17.8" fill="none" stroke="#d6e3f5" stroke-width="1.1" stroke-dasharray="1.2,0.6"/><polygon points="4.0,3.0 45.0,3.0 52.0,10.0 45.0,17.0 4.0,17.0 11.0,10.0" fill="#216bd0"/><text x="28" y="15" font-family="Liberation Sans" font-size="12.2" fill="#fff" text-anchor="middle">AAN</text></svg>
<svg class="r" style="left:858px;top:330px;overflow:hidden;" width="207" height="16" viewBox="0 0 207 16"><polygon points="7.0,1.0 41.0,1.0 48.0,8.0 41.0,15.0 7.0,15.0" fill="#d5e6f9"/><text x="24" y="12.9" font-family="Liberation Sans" font-size="11.5" fill="#333" text-anchor="middle">FAS</text><polygon points="43.0,1.0 84.0,1.0 91.0,8.0 84.0,15.0 43.0,15.0 50.0,8.0" fill="#d5e6f9"/><text x="67" y="12.9" font-family="Liberation Sans" font-size="11.5" fill="#333" text-anchor="middle">HRO</text><polygon points="86.0,1.0 127.0,1.0 134.0,8.0 127.0,15.0 86.0,15.0 93.0,8.0" fill="#216bd0"/><text x="110" y="12.9" font-family="Liberation Sans" font-size="11.5" fill="#fff" text-anchor="middle">AAN</text><polygon points="129.0,1.0 170.0,1.0 170.0,15.0 129.0,15.0 136.0,8.0" fill="#c4c4c4"/><text x="153" y="12.9" font-family="Liberation Sans" font-size="11.5" fill="#333" text-anchor="middle">SIM</text></svg>
<svg class="r" style="left:290px;top:359px;" width="14" height="14" viewBox="0 0 14 14"><circle cx="7.0" cy="7.0" r="7.0" fill="#4a80c0"/><path d="M3.15 7.14 L5.95 9.80 L10.50 4.34" fill="none" stroke="#fff" stroke-width="2.10" stroke-linecap="square"/></svg>
<div class="t" style="left:358.00px;top:359px;font-size:12.20px;line-height:16px;color:#262626;letter-spacing:-0.121px;">Approvers</div>
<div class="t" style="left:634.20px;top:359px;font-size:12.20px;line-height:16px;color:#262626;letter-spacing:-0.208px;">Vibeke Villasen</div>
<svg class="r" style="left:541px;top:356px;" width="58" height="20" viewBox="0 0 58 20"><path d="M1.8 2.2 L9 10 L1.8 17.8" fill="none" stroke="#d6e3f5" stroke-width="1.1" stroke-dasharray="1.2,0.6"/><path d="M46 2.2 L53.3 10 L46 17.8" fill="none" stroke="#d6e3f5" stroke-width="1.1" stroke-dasharray="1.2,0.6"/><polygon points="4.0,3.0 45.0,3.0 52.0,10.0 45.0,17.0 4.0,17.0 11.0,10.0" fill="#216bd0"/><text x="28" y="15" font-family="Liberation Sans" font-size="12.2" fill="#fff" text-anchor="middle">AYA</text></svg>
<svg class="r" style="left:858px;top:358px;overflow:hidden;" width="207" height="16" viewBox="0 0 207 16"><polygon points="7.0,1.0 41.0,1.0 48.0,8.0 41.0,15.0 7.0,15.0" fill="#d5e6f9"/><text x="24" y="12.9" font-family="Liberation Sans" font-size="11.5" fill="#333" text-anchor="middle">FAS</text><polygon points="43.0,1.0 84.0,1.0 91.0,8.0 84.0,15.0 43.0,15.0 50.0,8.0" fill="#216bd0"/><text x="67" y="12.9" font-family="Liberation Sans" font-size="11.5" fill="#fff" text-anchor="middle">AYA</text><polygon points="86.0,1.0 127.0,1.0 127.0,15.0 86.0,15.0 93.0,8.0" fill="#c4c4c4"/><text x="110" y="12.9" font-family="Liberation Sans" font-size="11.5" fill="#333" text-anchor="middle">HRU</text></svg>
<svg class="r" style="left:290px;top:387px;" width="14" height="14" viewBox="0 0 14 14"><circle cx="7.0" cy="7.0" r="7.0" fill="#4a80c0"/><path d="M3.15 7.14 L5.95 9.80 L10.50 4.34" fill="none" stroke="#fff" stroke-width="2.10" stroke-linecap="square"/></svg>
<svg class="r" style="left:315px;top:386px;" width="9" height="17" viewBox="0 0 9 17"><path d="M7.5 11.5 V4.5 A3 3 0 0 0 1.5 4.5 V13.5 A1.5 1.5 0 0 0 4.5 13.5 V5.5" fill="none" stroke="#7a7a7a" stroke-width="1"/></svg>
<div class="t" style="left:357.39px;top:387px;font-size:12.20px;line-height:16px;color:#262626;letter-spacing:-0.103px;">Quality Report 2019</div>
<div class="t" style="left:633.59px;top:387px;font-size:12.20px;line-height:16px;color:#262626;letter-spacing:-0.055px;">Quality</div>
<div class="t" style="left:758.39px;top:387px;font-size:12.20px;line-height:16px;color:#262626;letter-spacing:-0.022px;">2020 - 6</div>
<svg class="r" style="left:541px;top:384px;" width="58" height="20" viewBox="0 0 58 20"><path d="M1.8 2.2 L9 10 L1.8 17.8" fill="none" stroke="#d6e3f5" stroke-width="1.1" stroke-dasharray="1.2,0.6"/><path d="M46 2.2 L53.3 10 L46 17.8" fill="none" stroke="#d6e3f5" stroke-width="1.1" stroke-dasharray="1.2,0.6"/><polygon points="4.0,3.0 45.0,3.0 52.0,10.0 45.0,17.0 4.0,17.0 11.0,10.0" fill="#216bd0"/><text x="28" y="15" font-family="Liberation Sans" font-size="12.2" fill="#fff" text-anchor="middle">AAS</text></svg>
<svg class="r" style="left:858px;top:386px;overflow:hidden;" width="207" height="16" viewBox="0 0 207 16"><polygon points="7.0,1.0 41.0,1.0 48.0,8.0 41.0,15.0 7.0,15.0" fill="#d5e6f9"/><text x="24" y="12.9" font-family="Liberation Sans" font-size="11.5" fill="#333" text-anchor="middle" font-weight="bold">KSA</text><polygon points="43.0,1.0 84.0,1.0 91.0,8.0 84.0,15.0 43.0,15.0 50.0,8.0" fill="#d5e6f9"/><text x="67" y="12.9" font-family="Liberation Sans" font-size="11.5" fill="#333" text-anchor="middle">HRU</text><polygon points="86.0,1.0 127.0,1.0 134.0,8.0 127.0,15.0 86.0,15.0 93.0,8.0" fill="#216bd0"/><text x="110" y="12.9" font-family="Liberation Sans" font-size="11.5" fill="#fff" text-anchor="middle">AAS</text><polygon points="129.0,1.0 170.0,1.0 170.0,15.0 129.0,15.0 136.0,8.0" fill="#c4c4c4"/><text x="153" y="12.9" font-family="Liberation Sans" font-size="11.5" fill="#333" text-anchor="middle">SMO</text></svg>
<svg class="r" style="left:290px;top:415px;" width="14" height="14" viewBox="0 0 14 14"><circle cx="7.0" cy="7.0" r="7.0" fill="#4a80c0"/><path d="M3.15 7.14 L5.95 9.80 L10.50 4.34" fill="none" stroke="#fff" stroke-width="2.10" stroke-linecap="square"/></svg>
<svg class="r" style="left:334px;top:416px;" width="13" height="12" viewBox="0 0 13 12"><path d="M0.6 0.6 H4 L11.4 4 V11.4 H0.6 Z" fill="none" stroke="#e8c060" stroke-width="1.2"/><path d="M4 0.6 L7 5 L11.4 4" fill="none" stroke="#e8c060" stroke-width="1"/></svg>
<div class="t" style="left:357.39px;top:415px;font-size:12.20px;line-height:16px;color:#262626;letter-spacing:-0.121px;">Case help submittal</div>
<svg class="r" style="left:541px;top:412px;" width="58" height="20" viewBox="0 0 58 20"><path d="M1.8 2.2 L9 10 L1.8 17.8" fill="none" stroke="#d6e3f5" stroke-width="1.1" stroke-dasharray="1.2,0.6"/><path d="M46 2.2 L53.3 10 L46 17.8" fill="none" stroke="#d6e3f5" stroke-width="1.1" stroke-dasharray="1.2,0.6"/><polygon points="4.0,3.0 45.0,3.0 52.0,10.0 45.0,17.0 4.0,17.0 11.0,10.0" fill="#216bd0"/><text x="28" y="15" font-family="Liberation Sans" font-size="12.2" fill="#fff" text-anchor="middle" font-weight="bold">KSA</text></svg>
<svg class="r" style="left:858px;top:414px;overflow:hidden;" width="207" height="16" viewBox="0 0 207 16"><polygon points="7.0,1.0 41.0,1.0 48.0,8.0 41.0,15.0 7.0,15.0" fill="#d5e6f9"/><text x="24" y="12.9" font-family="Liberation Sans" font-size="11.5" fill="#333" text-anchor="middle">ITO</text><polygon points="43.0,1.0 84.0,1.0 91.0,8.0 84.0,15.0 43.0,15.0 50.0,8.0" fill="#d5e6f9"/><text x="67" y="12.9" font-family="Liberation Sans" font-size="11.5" fill="#333" text-anchor="middle">HRU</text><polygon points="86.0,1.0 127.0,1.0 134.0,8.0 127.0,15.0 86.0,15.0 93.0,8.0" fill="#216bd0"/><text x="110" y="12.9" font-family="Liberation Sans" font-size="11.5" fill="#fff" text-anchor="middle" font-weight="bold">KSA</text><polygon points="129.0,1.0 170.0,1.0 170.0,15.0 129.0,15.0 136.0,8.0" fill="#c4c4c4"/><text x="153" y="12.9" font-family="Liberation Sans" font-size="11.5" fill="#333" text-anchor="middle">CFL</text></svg>
<svg class="r" style="left:290px;top:443px;" width="14" height="14" viewBox="0 0 14 14"><circle cx="7.0" cy="7.0" r="7.0" fill="#4a80c0"/><path d="M3.15 7.14 L5.95 9.80 L10.50 4.34" fill="none" stroke="#fff" stroke-width="2.10" stroke-linecap="square"/></svg>
<svg class="r" style="left:334px;top:444px;" width="13" height="13" viewBox="0 0 13 13"><rect x="2.5" y="0.5" width="10" height="12" fill="#fff" stroke="#777" stroke-width="1"/><rect x="4.5" y="2.3" width="6.5" height="1" fill="#3d74c0"/><rect x="4.5" y="4.3" width="6.5" height="1" fill="#3d74c0"/><rect x="4.5" y="6.3" width="6.5" height="1" fill="#3d74c0"/><rect x="4.5" y="8.3" width="6.5" height="1" fill="#3d74c0"/><rect x="4.5" y="10.3" width="6.5" height="1" fill="#3d74c0"/><path d="M0.5 2 H2.5 M0.5 4 H2.5 M0.5 6 H2.5 M0.5 8 H2.5 M0.5 10 H2.5" stroke="#777" stroke-width="0.8"/></svg>
<div class="t" style="left:358.00px;top:443px;font-size:12.20px;line-height:16px;color:#262626;letter-spacing:0.100px;">Administration</div>
<div class="t" style="left:634.20px;top:443px;font-size:12.20px;line-height:16px;color:#262626;letter-spacing:-0.182px;">Anders Andersen</div>
<svg class="r" style="left:541px;top:440px;" width="58" height="20" viewBox="0 0 58 20"><path d="M1.8 2.2 L9 10 L1.8 17.8" fill="none" stroke="#d6e3f5" stroke-width="1.1" stroke-dasharray="1.2,0.6"/><polygon points="4.0,3.0 45.0,3.0 45.0,17.0 4.0,17.0 11.0,10.0" fill="#216bd0"/><text x="28" y="15" font-family="Liberation Sans" font-size="12.2" fill="#fff" text-anchor="middle">HRU</text></svg>
<svg class="r" style="left:858px;top:442px;overflow:hidden;" width="207" height="16" viewBox="0 0 207 16"><polygon points="7.0,1.0 41.0,1.0 48.0,8.0 41.0,15.0 7.0,15.0" fill="#d5e6f9"/><text x="24" y="12.9" font-family="Liberation Sans" font-size="11.5" fill="#333" text-anchor="middle">AAN</text><polygon points="43.0,1.0 84.0,1.0 91.0,8.0 84.0,15.0 43.0,15.0 50.0,8.0" fill="#d5e6f9"/><text x="67" y="12.9" font-family="Liberation Sans" font-size="11.5" fill="#333" text-anchor="middle">FAS</text><polygon points="86.0,1.0 127.0,1.0 127.0,15.0 86.0,15.0 93.0,8.0" fill="#216bd0"/><text x="110" y="12.9" font-family="Liberation Sans" font-size="11.5" fill="#fff" text-anchor="middle">HRU</text></svg>
<svg class="r" style="left:290px;top:471px;" width="14" height="14" viewBox="0 0 14 14"><circle cx="7.0" cy="7.0" r="7.0" fill="#4a80c0"/><path d="M3.15 7.14 L5.95 9.80 L10.50 4.34" fill="none" stroke="#fff" stroke-width="2.10" stroke-linecap="square"/></svg>
<svg class="r" style="left:315px;top:470px;" width="9" height="17" viewBox="0 0 9 17"><path d="M7.5 11.5 V4.5 A3 3 0 0 0 1.5 4.5 V13.5 A1.5 1.5 0 0 0 4.5 13.5 V5.5" fill="none" stroke="#7a7a7a" stroke-width="1"/></svg>
<div class="t" style="left:357.39px;top:471px;font-size:12.20px;line-height:16px;color:#262626;letter-spacing:-0.075px;">Summer briefing 2017</div>
<div class="t" style="left:633.22px;top:471px;font-size:12.20px;line-height:16px;color:#262626;letter-spacing:-0.031px;">Hanne Winter</div>
<svg class="r" style="left:541px;top:468px;" width="58" height="20" viewBox="0 0 58 20"><path d="M1.8 2.2 L9 10 L1.8 17.8" fill="none" stroke="#d6e3f5" stroke-width="1.1" stroke-dasharray="1.2,0.6"/><polygon points="4.0,3.0 45.0,3.0 45.0,17.0 4.0,17.0 11.0,10.0" fill="#216bd0"/><text x="28" y="15" font-family="Liberation Sans" font-size="12.2" fill="#fff" text-anchor="middle">HRU</text></svg>
<svg class="r" style="left:858px;top:470px;overflow:hidden;" width="207" height="16" viewBox="0 0 207 16"><polygon points="7.0,1.0 41.0,1.0 48.0,8.0 41.0,15.0 7.0,15.0" fill="#d5e6f9"/><text x="24" y="12.9" font-family="Liberation Sans" font-size="11.5" fill="#333" text-anchor="middle">HRO</text><polygon points="43.0,1.0 84.0,1.0 91.0,8.0 84.0,15.0 43.0,15.0 50.0,8.0" fill="#d5e6f9"/><text x="67" y="12.9" font-family="Liberation Sans" font-size="11.5" fill="#333" text-anchor="middle">FAS</text><polygon points="86.0,1.0 127.0,1.0 127.0,15.0 86.0,15.0 93.0,8.0" fill="#216bd0"/><text x="110" y="12.9" font-family="Liberation Sans" font-size="11.5" fill="#fff" text-anchor="middle">HRU</text></svg>
<svg class="r" style="left:290px;top:499px;" width="14" height="14" viewBox="0 0 14 14"><circle cx="7.0" cy="7.0" r="7.0" fill="#4a80c0"/><path d="M3.15 7.14 L5.95 9.80 L10.50 4.34" fill="none" stroke="#fff" stroke-width="2.10" stroke-linecap="square"/></svg>
<div class="t" style="left:357.76px;top:499px;font-size:12.20px;line-height:16px;color:#262626;letter-spacing:-0.318px;">The Barcelona Strategy</div>
<div class="t" style="left:633.22px;top:499px;font-size:12.20px;line-height:16px;color:#262626;letter-spacing:-0.183px;">Kaj Kofoed</div>
<svg class="r" style="left:541px;top:496px;" width="58" height="20" viewBox="0 0 58 20"><polygon points="4.0,3.0 45.0,3.0 52.0,10.0 45.0,17.0 4.0,17.0 11.0,10.0" fill="none" stroke="#ffffff" stroke-width="2.2" stroke-linejoin="miter"/><polygon points="4.0,3.0 45.0,3.0 52.0,10.0 45.0,17.0 4.0,17.0 11.0,10.0" fill="#216bd0"/><text x="28" y="15" font-family="Liberation Sans" font-size="12.2" fill="#fff" text-anchor="middle">CAC</text></svg>
<svg class="r" style="left:858px;top:498px;overflow:hidden;" width="207" height="16" viewBox="0 0 207 16"><rect x="6" y="0" width="207" height="16" fill="#fff"/><polygon points="7.0,1.0 41.0,1.0 48.0,8.0 41.0,15.0 7.0,15.0" fill="#d5e6f9"/><text x="24" y="12.9" font-family="Liberation Sans" font-size="11.5" fill="#333" text-anchor="middle">CCO</text><polygon points="43.0,1.0 84.0,1.0 91.0,8.0 84.0,15.0 43.0,15.0 50.0,8.0" fill="#d5e6f9"/><text x="67" y="12.9" font-family="Liberation Sans" font-size="11.5" fill="#333" text-anchor="middle" font-weight="bold">KSA</text><polygon points="86.0,1.0 127.0,1.0 134.0,8.0 127.0,15.0 86.0,15.0 93.0,8.0" fill="#216bd0"/><text x="110" y="12.9" font-family="Liberation Sans" font-size="11.5" fill="#fff" text-anchor="middle">CAC</text><polygon points="129.0,1.0 170.0,1.0 177.0,8.0 170.0,15.0 129.0,15.0 136.0,8.0" fill="#c4c4c4"/><text x="153" y="12.9" font-family="Liberation Sans" font-size="11.5" fill="#333" text-anchor="middle">CCA</text><polygon points="172.0,1.0 213.0,1.0 213.0,15.0 172.0,15.0 179.0,8.0" fill="#c4c4c4"/><text x="196" y="12.9" font-family="Liberation Sans" font-size="11.5" fill="#333" text-anchor="middle">CCL</text></svg>
<svg class="r" style="left:290px;top:527px;" width="14" height="14" viewBox="0 0 14 14"><circle cx="7.0" cy="7.0" r="7.0" fill="#4a80c0"/><path d="M3.15 7.14 L5.95 9.80 L10.50 4.34" fill="none" stroke="#fff" stroke-width="2.10" stroke-linecap="square"/></svg>
<div class="t" style="left:358.00px;top:527px;font-size:12.20px;line-height:16px;color:#262626;letter-spacing:-0.163px;">Vacation plan 2017</div>
<div class="t" style="left:634.20px;top:527px;font-size:12.20px;line-height:16px;color:#262626;letter-spacing:-0.208px;">Vibeke Villasen</div>
<svg class="r" style="left:541px;top:524px;" width="58" height="20" viewBox="0 0 58 20"><path d="M1.8 2.2 L9 10 L1.8 17.8" fill="none" stroke="#d6e3f5" stroke-width="1.1" stroke-dasharray="1.2,0.6"/><path d="M46 2.2 L53.3 10 L46 17.8" fill="none" stroke="#d6e3f5" stroke-width="1.1" stroke-dasharray="1.2,0.6"/><polygon points="4.0,3.0 45.0,3.0 52.0,10.0 45.0,17.0 4.0,17.0 11.0,10.0" fill="#216bd0"/><text x="28" y="15" font-family="Liberation Sans" font-size="12.2" fill="#fff" text-anchor="middle">HRU</text></svg>
<svg class="r" style="left:858px;top:526px;overflow:hidden;" width="207" height="16" viewBox="0 0 207 16"><polygon points="7.0,1.0 41.0,1.0 48.0,8.0 41.0,15.0 7.0,15.0" fill="#d5e6f9"/><text x="24" y="12.9" font-family="Liberation Sans" font-size="11.5" fill="#333" text-anchor="middle">FAS</text><polygon points="43.0,1.0 84.0,1.0 91.0,8.0 84.0,15.0 43.0,15.0 50.0,8.0" fill="#d5e6f9"/><text x="67" y="12.9" font-family="Liberation Sans" font-size="11.5" fill="#333" text-anchor="middle">HRO</text><polygon points="86.0,1.0 127.0,1.0 134.0,8.0 127.0,15.0 86.0,15.0 93.0,8.0" fill="#216bd0"/><text x="110" y="12.9" font-family="Liberation Sans" font-size="11.5" fill="#fff" text-anchor="middle">HRU</text><polygon points="129.0,1.0 170.0,1.0 170.0,15.0 129.0,15.0 136.0,8.0" fill="#c4c4c4"/><text x="153" y="12.9" font-family="Liberation Sans" font-size="11.5" fill="#333" text-anchor="middle">ASE</text></svg>
<svg class="r" style="left:290px;top:555px;" width="14" height="14" viewBox="0 0 14 14"><circle cx="7.0" cy="7.0" r="7.0" fill="#4a80c0"/><path d="M3.15 7.14 L5.95 9.80 L10.50 4.34" fill="none" stroke="#fff" stroke-width="2.10" stroke-linecap="square"/></svg>
<svg class="r" style="left:315px;top:554px;" width="9" height="17" viewBox="0 0 9 17"><path d="M7.5 11.5 V4.5 A3 3 0 0 0 1.5 4.5 V13.5 A1.5 1.5 0 0 0 4.5 13.5 V5.5" fill="none" stroke="#7a7a7a" stroke-width="1"/></svg>
<div class="t" style="left:357.02px;top:555px;font-size:12.20px;line-height:16px;color:#262626;letter-spacing:-0.153px;">Final answers to § 20-question</div>
<div class="t" style="left:633.22px;top:555px;font-size:12.20px;line-height:16px;color:#262626;letter-spacing:-0.342px;">Pia Poulsen</div>
<div class="t" style="left:758.39px;top:555px;font-size:12.20px;line-height:16px;color:#262626;letter-spacing:-0.063px;">2016 - 25</div>
<svg class="r" style="left:541px;top:552px;" width="58" height="20" viewBox="0 0 58 20"><path d="M1.8 2.2 L9 10 L1.8 17.8" fill="none" stroke="#d6e3f5" stroke-width="1.1" stroke-dasharray="1.2,0.6"/><path d="M46 2.2 L53.3 10 L46 17.8" fill="none" stroke="#d6e3f5" stroke-width="1.1" stroke-dasharray="1.2,0.6"/><polygon points="4.0,3.0 45.0,3.0 52.0,10.0 45.0,17.0 4.0,17.0 11.0,10.0" fill="#216bd0"/><text x="28" y="15" font-family="Liberation Sans" font-size="12.2" fill="#fff" text-anchor="middle">FAS</text></svg>
<svg class="r" style="left:858px;top:554px;overflow:hidden;" width="207" height="16" viewBox="0 0 207 16"><polygon points="7.0,1.0 41.0,1.0 48.0,8.0 41.0,15.0 7.0,15.0" fill="#d5e6f9"/><text x="24" y="12.9" font-family="Liberation Sans" font-size="11.5" fill="#333" text-anchor="middle">BBA</text><polygon points="43.0,1.0 84.0,1.0 91.0,8.0 84.0,15.0 43.0,15.0 50.0,8.0" fill="#d5e6f9"/><text x="67" y="12.9" font-family="Liberation Sans" font-size="11.5" fill="#333" text-anchor="middle">PPA</text><polygon points="86.0,1.0 127.0,1.0 134.0,8.0 127.0,15.0 86.0,15.0 93.0,8.0" fill="#d5e6f9"/><text x="110" y="12.9" font-family="Liberation Sans" font-size="11.5" fill="#333" text-anchor="middle">HRO</text><polygon points="129.0,1.0 170.0,1.0 177.0,8.0 170.0,15.0 129.0,15.0 136.0,8.0" fill="#216bd0"/><text x="153" y="12.9" font-family="Liberation Sans" font-size="11.5" fill="#fff" text-anchor="middle">FAS</text><polygon points="172.0,1.0 213.0,1.0 213.0,15.0 172.0,15.0 179.0,8.0" fill="#c4c4c4"/><text x="196" y="12.9" font-family="Liberation Sans" font-size="11.5" fill="#333" text-anchor="middle">HRU</text></svg>
<svg class="r" style="left:290px;top:583px;" width="14" height="14" viewBox="0 0 14 14"><circle cx="7.0" cy="7.0" r="7.0" fill="#4a80c0"/><path d="M3.15 7.14 L5.95 9.80 L10.50 4.34" fill="none" stroke="#fff" stroke-width="2.10" stroke-linecap="square"/></svg>
<div class="t" style="left:356.90px;top:583px;font-size:12.20px;line-height:16px;color:#262626;letter-spacing:0.111px;">Introduction to Communication</div>
<div class="t" style="left:634.20px;top:583px;font-size:12.20px;line-height:16px;color:#262626;letter-spacing:-0.208px;">Vibeke Villasen</div>
<svg class="r" style="left:541px;top:580px;" width="58" height="20" viewBox="0 0 58 20"><path d="M1.8 2.2 L9 10 L1.8 17.8" fill="none" stroke="#d6e3f5" stroke-width="1.1" stroke-dasharray="1.2,0.6"/><polygon points="4.0,3.0 45.0,3.0 45.0,17.0 4.0,17.0 11.0,10.0" fill="#216bd0"/><text x="28" y="15" font-family="Liberation Sans" font-size="12.2" fill="#fff" text-anchor="middle">AYA</text></svg>
<svg class="r" style="left:858px;top:582px;overflow:hidden;" width="207" height="16" viewBox="0 0 207 16"><polygon points="7.0,1.0 41.0,1.0 48.0,8.0 41.0,15.0 7.0,15.0" fill="#d5e6f9"/><text x="24" y="12.9" font-family="Liberation Sans" font-size="11.5" fill="#333" text-anchor="middle">FAS</text><polygon points="43.0,1.0 84.0,1.0 84.0,15.0 43.0,15.0 50.0,8.0" fill="#216bd0"/><text x="67" y="12.9" font-family="Liberation Sans" font-size="11.5" fill="#fff" text-anchor="middle">AYA</text></svg>
<svg class="r" style="left:290px;top:611px;" width="14" height="14" viewBox="0 0 14 14"><circle cx="7" cy="7" r="7" fill="#4a80c0"/><path d="M10.8 7 H4.5 M7 4 L4 7 L7 10" fill="none" stroke="#fff" stroke-width="2"/></svg>
<div class="t" style="left:356.90px;top:611px;font-size:12.20px;line-height:16px;color:#262626;letter-spacing:0.134px;">Introduction to HR</div>
<div class="t" style="left:634.20px;top:611px;font-size:12.20px;line-height:16px;color:#262626;letter-spacing:-0.208px;">Vibeke Villasen</div>
<svg class="r" style="left:541px;top:608px;" width="58" height="20" viewBox="0 0 58 20"><path d="M46 2.2 L53.3 10 L46 17.8" fill="none" stroke="#d6e3f5" stroke-width="1.1" stroke-dasharray="1.2,0.6"/><polygon points="11.0,3.0 45.0,3.0 52.0,10.0 45.0,17.0 11.0,17.0" fill="#216bd0"/><text x="28" y="15" font-family="Liberation Sans" font-size="12.2" fill="#fff" text-anchor="middle">FAS</text></svg>
<svg class="r" style="left:858px;top:610px;overflow:hidden;" width="207" height="16" viewBox="0 0 207 16"><polygon points="7.0,1.0 41.0,1.0 48.0,8.0 41.0,15.0 7.0,15.0" fill="#216bd0"/><text x="24" y="12.9" font-family="Liberation Sans" font-size="11.5" fill="#fff" text-anchor="middle">FAS</text><polygon points="43.0,1.0 84.0,1.0 84.0,15.0 43.0,15.0 50.0,8.0" fill="#c4c4c4"/><text x="67" y="12.9" font-family="Liberation Sans" font-size="11.5" fill="#333" text-anchor="middle">HRO</text></svg>
<svg class="r" style="left:290px;top:639px;" width="14" height="14" viewBox="0 0 14 14"><circle cx="7" cy="7" r="7" fill="#4a80c0"/><path d="M10.8 7 H4.5 M7 4 L4 7 L7 10" fill="none" stroke="#fff" stroke-width="2"/></svg>
<svg class="r" style="left:315px;top:638px;" width="9" height="17" viewBox="0 0 9 17"><path d="M7.5 11.5 V4.5 A3 3 0 0 0 1.5 4.5 V13.5 A1.5 1.5 0 0 0 4.5 13.5 V5.5" fill="none" stroke="#7a7a7a" stroke-width="1"/></svg>
<svg class="r" style="left:334px;top:640px;" width="13" height="13" viewBox="0 0 13 13"><rect x="2.5" y="0.5" width="10" height="12" fill="#fff" stroke="#777" stroke-width="1"/><rect x="4.5" y="2.3" width="6.5" height="1" fill="#3d74c0"/><rect x="4.5" y="4.3" width="6.5" height="1" fill="#3d74c0"/><rect x="4.5" y="6.3" width="6.5" height="1" fill="#3d74c0"/><rect x="4.5" y="8.3" width="6.5" height="1" fill="#3d74c0"/><rect x="4.5" y="10.3" width="6.5" height="1" fill="#3d74c0"/><path d="M0.5 2 H2.5 M0.5 4 H2.5 M0.5 6 H2.5 M0.5 8 H2.5 M0.5 10 H2.5" stroke="#777" stroke-width="0.8"/></svg>
<div class="t" style="left:357.02px;top:639px;font-size:12.20px;line-height:16px;color:#262626;letter-spacing:0.150px;">New budget</div>
<div class="t" style="left:633.22px;top:639px;font-size:12.20px;line-height:16px;color:#262626;letter-spacing:0.041px;">Hugo Hugosen</div>
<div class="t" style="left:758.39px;top:639px;font-size:12.20px;line-height:16px;color:#262626;letter-spacing:-0.022px;">2017 - 7</div>
<svg class="r" style="left:541px;top:636px;" width="58" height="20" viewBox="0 0 58 20"><path d="M46 2.2 L53.3 10 L46 17.8" fill="none" stroke="#d6e3f5" stroke-width="1.1" stroke-dasharray="1.2,0.6"/><polygon points="11.0,3.0 45.0,3.0 52.0,10.0 45.0,17.0 11.0,17.0" fill="#216bd0"/><text x="28" y="15" font-family="Liberation Sans" font-size="12.2" fill="#fff" text-anchor="middle">HRU</text></svg>
<svg class="r" style="left:858px;top:638px;overflow:hidden;" width="207" height="16" viewBox="0 0 207 16"><polygon points="7.0,1.0 41.0,1.0 48.0,8.0 41.0,15.0 7.0,15.0" fill="#216bd0"/><text x="24" y="12.9" font-family="Liberation Sans" font-size="11.5" fill="#fff" text-anchor="middle">HRU</text><polygon points="43.0,1.0 84.0,1.0 91.0,8.0 84.0,15.0 43.0,15.0 50.0,8.0" fill="#c4c4c4"/><text x="67" y="12.9" font-family="Liberation Sans" font-size="11.5" fill="#333" text-anchor="middle" font-weight="bold">KSA</text><polygon points="86.0,1.0 127.0,1.0 127.0,15.0 86.0,15.0 93.0,8.0" fill="#c4c4c4"/><text x="110" y="12.9" font-family="Liberation Sans" font-size="11.5" fill="#333" text-anchor="middle">AYA</text></svg>
<svg class="r" style="left:290px;top:667px;" width="14" height="14" viewBox="0 0 14 14"><circle cx="7.0" cy="7.0" r="7.0" fill="#4a80c0"/><path d="M3.15 7.14 L5.95 9.80 L10.50 4.34" fill="none" stroke="#fff" stroke-width="2.10" stroke-linecap="square"/></svg>
<svg class="r" style="left:334px;top:668px;" width="13" height="12" viewBox="0 0 13 12"><path d="M0.6 0.6 H4 L11.4 4 V11.4 H0.6 Z" fill="none" stroke="#e8c060" stroke-width="1.2"/><path d="M4 0.6 L7 5 L11.4 4" fill="none" stroke="#e8c060" stroke-width="1"/></svg>
<div class="t" style="left:357.39px;top:667px;font-size:12.20px;line-height:16px;color:#262626;letter-spacing:-0.140px;">Submission concerning citizen...</div>
<div class="t" style="left:758.39px;top:667px;font-size:12.20px;line-height:16px;color:#262626;letter-spacing:-0.179px;">2016 - 1</div>
<svg class="r" style="left:541px;top:664px;" width="58" height="20" viewBox="0 0 58 20"><path d="M1.8 2.2 L9 10 L1.8 17.8" fill="none" stroke="#d6e3f5" stroke-width="1.1" stroke-dasharray="1.2,0.6"/><path d="M46 2.2 L53.3 10 L46 17.8" fill="none" stroke="#d6e3f5" stroke-width="1.1" stroke-dasharray="1.2,0.6"/><polygon points="4.0,3.0 45.0,3.0 52.0,10.0 45.0,17.0 4.0,17.0 11.0,10.0" fill="#216bd0"/><text x="28" y="15" font-family="Liberation Sans" font-size="12.2" fill="#fff" text-anchor="middle">SIM</text></svg>
<svg class="r" style="left:858px;top:666px;overflow:hidden;" width="207" height="16" viewBox="0 0 207 16"><polygon points="7.0,1.0 41.0,1.0 48.0,8.0 41.0,15.0 7.0,15.0" fill="#d5e6f9"/><text x="24" y="12.9" font-family="Liberation Sans" font-size="11.5" fill="#333" text-anchor="middle">HRO</text><polygon points="43.0,1.0 84.0,1.0 91.0,8.0 84.0,15.0 43.0,15.0 50.0,8.0" fill="#216bd0"/><text x="67" y="12.9" font-family="Liberation Sans" font-size="11.5" fill="#fff" text-anchor="middle">SIM</text><polygon points="86.0,1.0 127.0,1.0 127.0,15.0 86.0,15.0 93.0,8.0" fill="#c4c4c4"/><text x="110" y="12.9" font-family="Liberation Sans" font-size="11.5" fill="#333" text-anchor="middle">PPO</text></svg>
<div class="t" style="left:1099.51px;top:201px;font-size:14.90px;line-height:19px;color:#333;letter-spacing:0.422px;">Record</div>
<div class="t" style="left:1166.39px;top:200px;font-size:15.10px;line-height:19px;color:#333;letter-spacing:0.285px;">Participants</div>
<div class="t" style="left:1265.70px;top:200px;font-size:15.07px;line-height:19px;color:#333;font-weight:bold;letter-spacing:0.179px;">Approval</div>
<div class="r" style="left:1266px;top:226px;width:66px;height:2px;background:#216bcb;"></div>
<div class="r" style="left:1100px;top:240px;width:224px;height:28px;background:#f0f0f0;"></div>
<div class="t" style="left:1111.59px;top:248px;font-size:11.40px;line-height:15px;color:#262626;letter-spacing:0.131px;">Responsible:</div>
<div class="t" style="left:1189.07px;top:247px;font-size:11.60px;line-height:15px;color:#262626;letter-spacing:0.133px;">Kaj Kofoed</div>
<svg class="r" style="left:1298px;top:248.5px;" width="13" height="9" viewBox="0 0 13 9"><path d="M1 1.5 L6.5 7 L12 1.5" fill="none" stroke="#808080" stroke-width="2.4"/></svg>
<div class="t" style="left:1099.42px;top:278px;font-size:11.50px;line-height:15px;color:#333;letter-spacing:0.143px;">Step 1:</div>
<div class="r" style="left:1100px;top:295px;width:224px;height:28px;background:#f0f0f0;"></div>
<svg class="r" style="left:1113px;top:302px;" width="14" height="14" viewBox="0 0 14 14"><circle cx="7.0" cy="7.0" r="7.0" fill="#4a80c0"/><path d="M3.15 7.14 L5.95 9.80 L10.50 4.34" fill="none" stroke="#fff" stroke-width="2.10" stroke-linecap="square"/></svg>
<div class="t" style="left:1133.27px;top:302px;font-size:11.60px;line-height:15px;color:#262626;letter-spacing:0.064px;">Klaus Salomon</div>
<svg class="r" style="left:1298px;top:303.5px;" width="13" height="9" viewBox="0 0 13 9"><path d="M1 1.5 L6.5 7 L12 1.5" fill="none" stroke="#808080" stroke-width="2.4"/></svg>
<div class="t" style="left:1099.42px;top:336px;font-size:11.50px;line-height:15px;color:#333;letter-spacing:0.109px;">Step 2:</div>
<div class="r" style="left:1100px;top:353px;width:224px;height:28px;background:#b2d5f1;"></div>
<div class="r" style="left:1100px;top:381px;width:224px;height:1px;background:#c8c8c8;"></div>
<div class="t" style="left:1117.36px;top:361px;font-size:11.80px;line-height:15px;color:#262626;letter-spacing:-0.003px;">Kuno Konradsen</div>
<svg class="r" style="left:1298px;top:362.5px;" width="13" height="9" viewBox="0 0 13 9"><path d="M1 7 L6.5 1.5 L12 7" fill="none" stroke="#808080" stroke-width="2.4"/></svg>
<div class="r" style="left:1100px;top:382px;width:224px;height:62px;background:#f0f0f0;"></div>
<div class="t" style="left:1109.42px;top:395px;font-size:11.60px;line-height:15px;color:#262626;letter-spacing:0.450px;">Comment:</div>
<div class="t" style="left:1119.81px;top:420px;font-size:11.80px;line-height:15px;color:#262626;letter-spacing:0.044px;">Current approval in process</div>
<div class="t" style="left:1099.42px;top:457px;font-size:11.50px;line-height:15px;color:#333;letter-spacing:0.109px;">Step 3:</div>
<div class="r" style="left:1100px;top:474px;width:224px;height:28px;background:#f0f0f0;"></div>
<div class="t" style="left:1117.66px;top:482px;font-size:11.80px;line-height:15px;color:#262626;letter-spacing:-0.236px;">Kalla Clausen</div>
<div class="t" style="left:1099.42px;top:515px;font-size:11.50px;line-height:15px;color:#333;letter-spacing:0.109px;">Step 4:</div>
<div class="r" style="left:1100px;top:532px;width:224px;height:28px;background:#f0f0f0;"></div>
<div class="t" style="left:1117.66px;top:540px;font-size:11.80px;line-height:15px;color:#262626;letter-spacing:-0.013px;">Kalle Aflason</div>
<svg class="r" style="left:1330px;top:228px;" width="13" height="495" viewBox="0 0 13 495"><path d="M0.5 495 V0.5 H11.5 V495" fill="none" stroke="#666" stroke-width="1" stroke-dasharray="2,1"/></svg>
<div class="r" style="left:1335px;top:228px;width:2px;height:495px;background:#dcdcdc;"></div>
<svg class="r" style="left:1634px;top:196px;" width="13" height="12" viewBox="0 0 13 12"><path d="M4 0.5 H12.5 V11.5 H4" fill="none" stroke="#3d74c0" stroke-width="1"/><rect x="0.5" y="7" width="4" height="4" fill="#fff" stroke="#777" stroke-width="1"/><path d="M4 7 L9 2.5 M6 2.5 H9.5 V6" fill="none" stroke="#777" stroke-width="1.5"/></svg>
<div class="t" style="left:1352.40px;top:244px;font-size:11.90px;line-height:15px;color:#333;">27-11-2015 14:54</div>
<svg class="r" style="left:1354px;top:265px;" width="14" height="14" viewBox="0 0 14 14"><circle cx="7" cy="7" r="7" fill="#4a80c0"/><path d="M3.2 7 H9.5 M7 4 L10 7 L7 10" fill="none" stroke="#fff" stroke-width="2"/></svg>
<div class="t" style="left:1374.41px;top:265px;font-size:11.75px;line-height:15px;color:#333;font-style:italic;letter-spacing:-0.015px;">Carmen Collins starts the approval</div>
<div class="r" style="left:1347px;top:292px;width:283px;height:1px;background:#d0d0d0;"></div>
<div class="t" style="left:1352.52px;top:311px;font-size:11.90px;line-height:15px;color:#333;">01-12-2015 15:06</div>
<svg class="r" style="left:1354px;top:332px;" width="14" height="14" viewBox="0 0 14 14"><circle cx="7" cy="7" r="7" fill="#4a80c0"/><path d="M10.8 7 H4.5 M7 4 L4 7 L7 10" fill="none" stroke="#fff" stroke-width="2"/></svg>
<div class="t" style="left:1374.77px;top:332px;font-size:11.75px;line-height:15px;color:#333;font-weight:bold;font-style:italic;letter-spacing:0.013px;">Klaus Salomon (step 1) returns the approval</div>
<div class="r" style="left:1347px;top:359px;width:283px;height:1px;background:#d0d0d0;"></div>
<div class="t" style="left:1352.52px;top:378px;font-size:11.90px;line-height:15px;color:#333;">02-10-2018 10:25</div>
<div class="t" style="left:1352.77px;top:399px;font-size:11.75px;line-height:15px;color:#333;font-weight:bold;font-style:italic;letter-spacing:0.010px;">Klaus Salomon edits the approval</div>
<div class="r" style="left:1347px;top:426px;width:283px;height:1px;background:#d0d0d0;"></div>
<div class="t" style="left:1352.52px;top:445px;font-size:11.90px;line-height:15px;color:#333;">02-10-2018 11:18</div>
<svg class="r" style="left:1354px;top:466px;" width="14" height="14" viewBox="0 0 14 14"><circle cx="7" cy="7" r="7" fill="#4a80c0"/><path d="M3.2 7 H9.5 M7 4 L10 7 L7 10" fill="none" stroke="#fff" stroke-width="2"/></svg>
<div class="t" style="left:1374.77px;top:466px;font-size:11.75px;line-height:15px;color:#333;font-weight:bold;font-style:italic;letter-spacing:-0.061px;">Klaus Salomon resumes the approval</div>
<div class="r" style="left:1347px;top:493px;width:283px;height:1px;background:#d0d0d0;"></div>
<div class="t" style="left:1352.40px;top:512px;font-size:11.90px;line-height:15px;color:#333;">21-04-2020 11:43</div>
<div class="t" style="left:1352.41px;top:533px;font-size:11.75px;line-height:15px;color:#333;font-style:italic;letter-spacing:-0.013px;">Carmen Collins edits the approval</div>
<div class="r" style="left:1347px;top:560px;width:283px;height:1px;background:#d0d0d0;"></div>
<div class="t" style="left:1352.40px;top:579px;font-size:11.90px;line-height:15px;color:#333;">22-05-2020 14:54</div>
<svg class="r" style="left:1354px;top:600px;" width="14" height="14" viewBox="0 0 14 14"><circle cx="7.0" cy="7.0" r="7.0" fill="#4a80c0"/><path d="M3.15 7.14 L5.95 9.80 L10.50 4.34" fill="none" stroke="#fff" stroke-width="2.10" stroke-linecap="square"/></svg>
<div class="t" style="left:1374.77px;top:600px;font-size:11.75px;line-height:15px;color:#333;font-weight:bold;font-style:italic;letter-spacing:-0.042px;">Klaus Salomon (step 1) has approved</div>
<div class="r" style="left:1px;top:723px;width:1650px;height:1px;background:#cfc8c0;"></div>
<div class="r" style="left:0px;top:724px;width:1652px;height:19px;background:#216bcb;"></div>
<div class="r" style="left:0px;top:0px;width:1px;height:743px;background:#1a59ad;"></div>
<div class="r" style="left:1651px;top:0px;width:1px;height:743px;background:#1a59ad;"></div>
<div class="t" style="left:7.93px;top:728px;font-size:11.90px;line-height:15px;color:#fff;letter-spacing:0.042px;">Items: 29 - updated today 08:37 (22 minutes ago)</div>
<div class="t" style="left:1511.40px;top:728px;font-size:11.90px;line-height:15px;color:#fff;letter-spacing:0.252px;">Case: ---- - ----</div>
<svg class="r" style="left:1597px;top:726px;" width="14" height="16" viewBox="0 0 14 16"><circle cx="7" cy="9" r="5.5" fill="none" stroke="#fff" stroke-width="1.8"/><path d="M7 9 V5.5 M5 1.2 H9 M11.5 3.5 L12.8 2.2" stroke="#fff" stroke-width="1.6"/></svg>
<svg class="r" style="left:1614px;top:727px;" width="14" height="14" viewBox="0 0 14 14"><path d="M1 1 H6.5 L13 7.5 L7.5 13 L1 6.5 Z" fill="none" stroke="#fff" stroke-width="1.4"/><circle cx="4" cy="4" r="1" fill="#fff"/></svg>
</body></html>
